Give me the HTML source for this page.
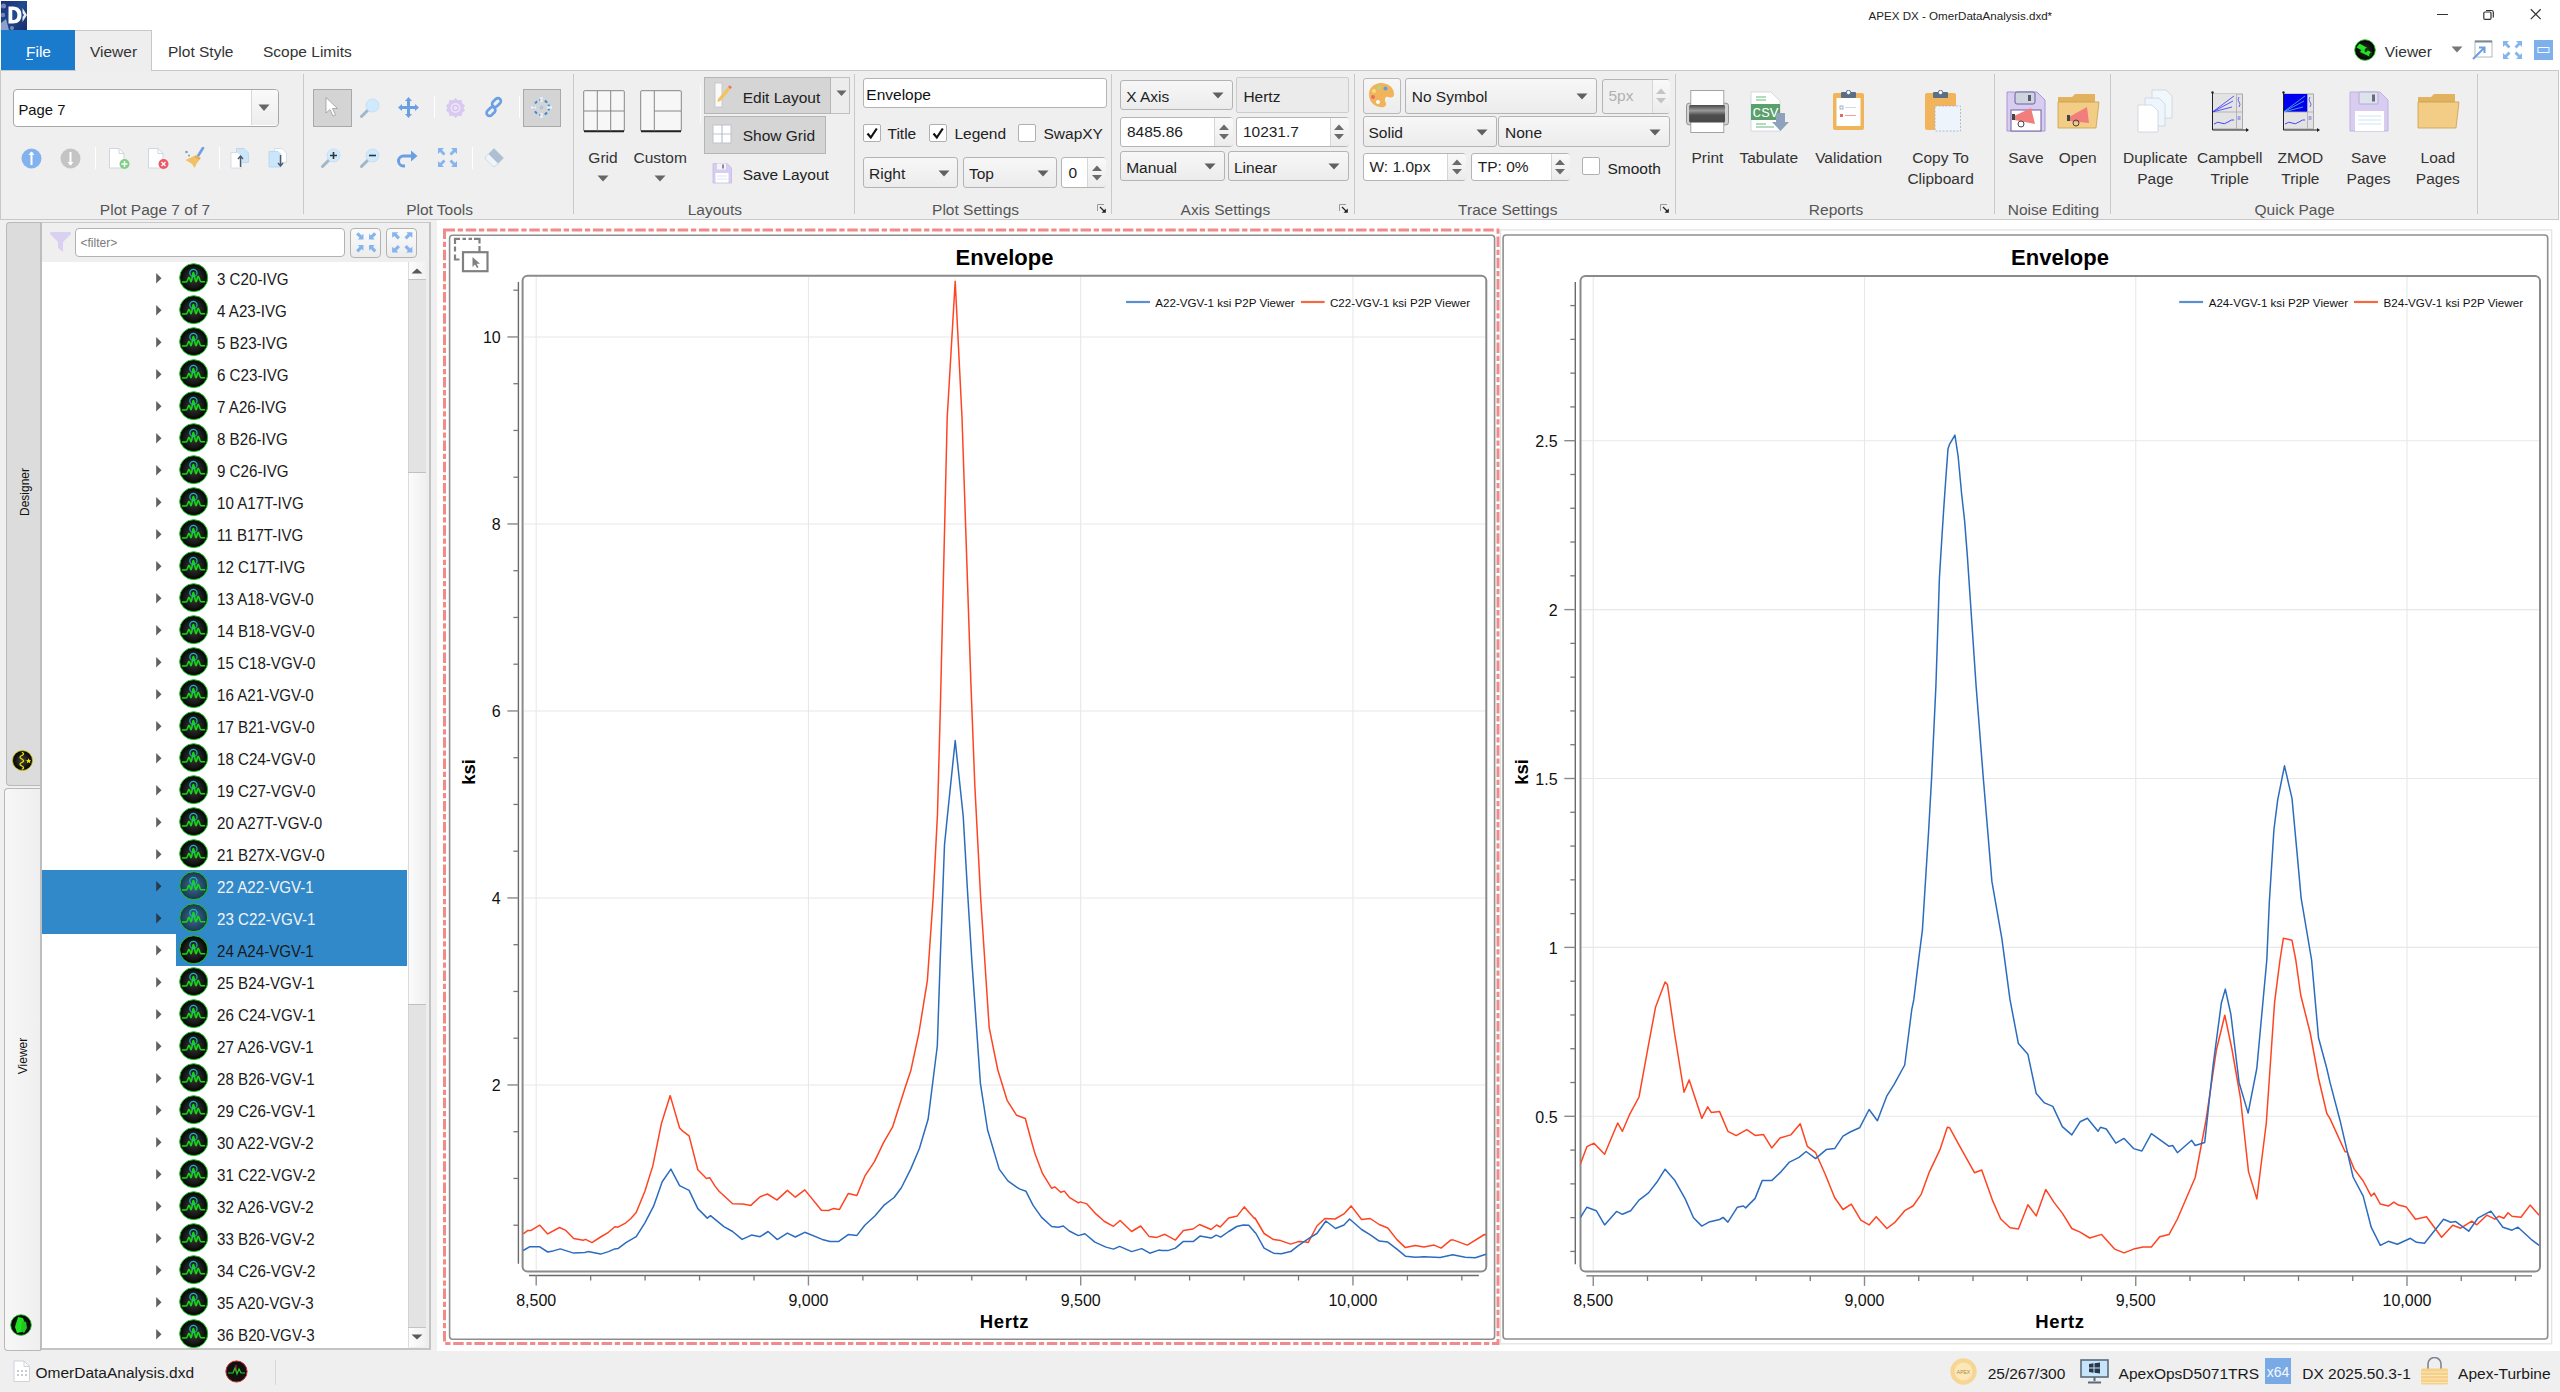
<!DOCTYPE html>
<html><head><meta charset="utf-8"><style>
html,body{margin:0;padding:0;width:2560px;height:1392px;overflow:hidden;background:#fff}
.a{position:absolute;margin:0;padding:0}
.t{white-space:nowrap;font-family:"Liberation Sans", sans-serif}
</style></head><body>
<div class="a" style="left:0px;top:0px;width:2560px;height:30px;background:#fff"></div><svg class="a" style="left:1px;top:1px;" width="27" height="29" viewBox="0 0 27 29"><defs><linearGradient id="lg" x1="0" y1="0" x2="1" y2="1"><stop offset="0" stop-color="#1c2f78"/><stop offset="0.5" stop-color="#1f4a8e"/><stop offset="1" stop-color="#1a2c6a"/></linearGradient></defs><rect x="0" y="0" width="26" height="29" fill="url(#lg)"/><circle cx="2.5" cy="5" r="2.5" fill="#c8cde8" opacity="0.55"/><circle cx="2" cy="14" r="2.2" fill="#c8cde8" opacity="0.5"/><path d="M0 22 L5 18 L8 29 H0 Z" fill="#d8dcf0" opacity="0.6"/><circle cx="11" cy="27" r="2" fill="#d8dcf0" opacity="0.5"/><path d="M7.5 5.5 H12 C17.5 5.5 20.5 9 20.5 14 C20.5 19 17.5 22.5 12 22.5 H7.5 Z M11.3 9 V19 H12 C15 19 16.4 17 16.4 14 C16.4 11 15 9 12 9 Z" fill="#fff"/><path d="M21.5 7 L26 14 L21.5 21 V16 L23 14 L21.5 12 Z" fill="#fff" opacity="0.9"/></svg><div class="a t" style="left:1868.5px;top:10.4px;line-height:11.6px;font-size:11.6px;color:#222;font-weight:normal;">APEX DX - OmerDataAnalysis.dxd*</div><div class="a" style="left:2437px;top:14px;width:11px;height:1px;background:#333"></div><svg class="a" style="left:2481px;top:8px;" width="14" height="14" viewBox="0 0 14 14"><rect x="2.8" y="4" width="7.2" height="7.4" rx="1.2" fill="none" stroke="#333" stroke-width="1.2"/><path d="M5 2.5 H10.5 Q12.3 2.5 12.3 4.3 V9.5" fill="none" stroke="#333" stroke-width="1.2"/></svg><svg class="a" style="left:2529px;top:8px;" width="14" height="14" viewBox="0 0 14 14"><path d="M1.8 1.3 L11.7 11.1 M11.7 1.3 L1.8 11.1" stroke="#333" stroke-width="1.2"/></svg><div class="a" style="left:0px;top:30px;width:2560px;height:41px;background:#fff"></div><div class="a" style="left:1px;top:30px;width:74px;height:41px;background:#1a7bcd"></div><div class="a t" style="left:26.0px;top:44.1px;line-height:15.5px;font-size:15.5px;color:#fff;font-weight:normal;">File</div><div class="a" style="left:26px;top:58.8px;width:6.8px;height:1.3px;background:#fff"></div><div class="a" style="left:75px;top:30px;width:77px;height:41px;background:#eeeeee;border-top:1px solid #c8c8c8;border-right:1px solid #c8c8c8;box-sizing:border-box"></div><div class="a t" style="left:90.0px;top:44.1px;line-height:15.5px;font-size:15.5px;color:#333;font-weight:normal;">Viewer</div><div class="a t" style="left:168.0px;top:44.1px;line-height:15.5px;font-size:15.5px;color:#333;font-weight:normal;">Plot Style</div><div class="a t" style="left:263.0px;top:44.1px;line-height:15.5px;font-size:15.5px;color:#333;font-weight:normal;">Scope Limits</div><div class="a" style="left:0px;top:70px;width:2559px;height:150px;background:#efefef;border-top:1px solid #c8c8c8;border-bottom:1.5px solid #c8c8c8;border-left:1px solid #c8c8c8;border-right:1.5px solid #c8c8c8;box-sizing:border-box"></div><div class="a" style="left:76px;top:69px;width:75px;height:3px;background:#eeeeee"></div><div class="a" style="left:303px;top:74px;width:1.2px;height:140px;background:#c9c9c9"></div><div class="a" style="left:572.5px;top:74px;width:1.2px;height:140px;background:#c9c9c9"></div><div class="a" style="left:854px;top:74px;width:1.2px;height:140px;background:#c9c9c9"></div><div class="a" style="left:1111px;top:74px;width:1.2px;height:140px;background:#c9c9c9"></div><div class="a" style="left:1354px;top:74px;width:1.2px;height:140px;background:#c9c9c9"></div><div class="a" style="left:1675px;top:74px;width:1.2px;height:140px;background:#c9c9c9"></div><div class="a" style="left:1994px;top:74px;width:1.2px;height:140px;background:#c9c9c9"></div><div class="a" style="left:2110px;top:74px;width:1.2px;height:140px;background:#c9c9c9"></div><div class="a" style="left:2476.5px;top:74px;width:1.2px;height:140px;background:#c9c9c9"></div><div class="a t" style="left:-245.0px;width:800px;text-align:center;top:201.9px;line-height:15.5px;font-size:15.5px;color:#555555;font-weight:normal;">Plot Page 7 of 7</div><div class="a t" style="left:39.6px;width:800px;text-align:center;top:201.9px;line-height:15.5px;font-size:15.5px;color:#555555;font-weight:normal;">Plot Tools</div><div class="a t" style="left:314.9px;width:800px;text-align:center;top:201.9px;line-height:15.5px;font-size:15.5px;color:#555555;font-weight:normal;">Layouts</div><div class="a t" style="left:575.6px;width:800px;text-align:center;top:201.9px;line-height:15.5px;font-size:15.5px;color:#555555;font-weight:normal;">Plot Settings</div><div class="a t" style="left:825.4px;width:800px;text-align:center;top:201.9px;line-height:15.5px;font-size:15.5px;color:#555555;font-weight:normal;">Axis Settings</div><div class="a t" style="left:1107.8px;width:800px;text-align:center;top:201.9px;line-height:15.5px;font-size:15.5px;color:#555555;font-weight:normal;">Trace Settings</div><div class="a t" style="left:1436.0px;width:800px;text-align:center;top:201.9px;line-height:15.5px;font-size:15.5px;color:#555555;font-weight:normal;">Reports</div><div class="a t" style="left:1653.4px;width:800px;text-align:center;top:201.9px;line-height:15.5px;font-size:15.5px;color:#555555;font-weight:normal;">Noise Editing</div><div class="a t" style="left:1894.6px;width:800px;text-align:center;top:201.9px;line-height:15.5px;font-size:15.5px;color:#555555;font-weight:normal;">Quick Page</div><div class="a" style="left:13px;top:89px;width:265.5px;height:37.5px;background:#fff;border:1.3px solid #a8a8a8;border-radius:4px;box-sizing:border-box"></div><div class="a" style="left:251px;top:90.3px;width:26.2px;height:35px;background:linear-gradient(#fafafa,#ededed);border-left:1px solid #d8d8d8;border-radius:0 3px 3px 0"></div><svg class="a" style="left:258px;top:104px;" width="12" height="8" viewBox="0 0 12 8"><path d="M0.5 0.5 H11.5 L6 7 Z" fill="#666"/></svg><div class="a t" style="left:18.5px;top:103.1px;line-height:14.8px;font-size:14.8px;color:#111;font-weight:normal;">Page 7</div><svg class="a" style="left:21px;top:148px;" width="21" height="21" viewBox="0 0 21 21"><circle cx="10.5" cy="10.5" r="10" fill="#83b3ee"/><path d="M10.5 4 V17" stroke="#fff" stroke-width="2"/><path d="M7.5 7 L10.5 3.5 L13.5 7" fill="#fff"/></svg><svg class="a" style="left:59.5px;top:148px;" width="21" height="21" viewBox="0 0 21 21"><circle cx="10.5" cy="10.5" r="10" fill="#c4c4c4"/><path d="M10.5 4 V17" stroke="#fff" stroke-width="2"/><path d="M7.5 14 L10.5 17.5 L13.5 14" fill="#fff"/></svg><div class="a" style="left:95px;top:147px;width:1px;height:22px;background:#fff"></div><div class="a" style="left:219px;top:147px;width:1px;height:22px;background:#fff"></div><svg class="a" style="left:108px;top:147px;" width="22" height="23" viewBox="0 0 22 23"><path d="M1.5 1.5 H11 L16 6.5 V21 H1.5 Z" fill="#fff" stroke="#cfd6e0" stroke-width="1"/><path d="M11 1.5 V6.5 H16" fill="none" stroke="#cfd6e0"/><circle cx="16.5" cy="17" r="5" fill="#7fcf86"/><path d="M16.5 14 V20 M13.5 17 H19.5" stroke="#fff" stroke-width="1.5"/></svg><svg class="a" style="left:147px;top:147px;" width="22" height="23" viewBox="0 0 22 23"><path d="M1.5 1.5 H11 L16 6.5 V21 H1.5 Z" fill="#fff" stroke="#cfd6e0" stroke-width="1"/><path d="M11 1.5 V6.5 H16" fill="none" stroke="#cfd6e0"/><circle cx="16.5" cy="17" r="5" fill="#ee5a63"/><path d="M14.5 15 L18.5 19 M18.5 15 L14.5 19" stroke="#fff" stroke-width="1.4"/></svg><svg class="a" style="left:184px;top:147px;" width="22" height="23" viewBox="0 0 22 23"><circle cx="2.5" cy="5" r="1.3" fill="#7d9ec5"/><circle cx="5" cy="8.5" r="1" fill="#7d9ec5"/><path d="M19 1 L14 9" stroke="#6fa0e6" stroke-width="2.6" stroke-linecap="round"/><path d="M12 8 L17 11 L13 16 L10.5 21 L8 17 L1.5 13 Z" fill="#f0c266"/><path d="M11 9.5 L16 12" stroke="#e57d5b" stroke-width="0.8"/></svg><svg class="a" style="left:230px;top:147px;" width="20" height="23" viewBox="0 0 20 23"><path d="M6.5 1.5 H14 L18.5 6 V15.5 H6.5 Z" fill="#c9e6fb" stroke="#b6d3ee" stroke-width="0.8"/><path d="M1 5.5 H8 L11.5 9 V21 H1 Z" fill="#fff" stroke="#cfd6e0" stroke-width="0.8"/><path d="M10.5 9.5 V20 M8 12 L10.5 9 L13 12" fill="none" stroke="#4a5a6a" stroke-width="1.4"/></svg><svg class="a" style="left:268px;top:147px;" width="22" height="23" viewBox="0 0 22 23"><path d="M6.5 1.5 H14 L18.5 6 V15.5 H6.5 Z" fill="#fff" stroke="#cfd6e0" stroke-width="0.8"/><path d="M1 4.5 H10 L13 7.5 V20 H1 Z" fill="#c9e6fb" stroke="#b6d3ee" stroke-width="0.8"/><path d="M12.5 8 V18.5 M10 16 L12.5 19 L15 16" fill="none" stroke="#4a5a6a" stroke-width="1.4"/></svg><div class="a" style="left:313px;top:89px;width:38.5px;height:38px;background:#d4d4d4;border:1.3px solid #a9a9a9;box-sizing:border-box"></div><div class="a" style="left:522.5px;top:89px;width:38.5px;height:38px;background:#d4d4d4;border:1.3px solid #a9a9a9;box-sizing:border-box"></div><svg class="a" style="left:324px;top:96px;" width="16" height="22" viewBox="0 0 16 22"><path d="M2 1.5 L2 17 L6 13.5 L9 20 L11.5 19 L8.5 12.5 L13.5 12.5 Z" fill="#fff" stroke="#9a9a9a" stroke-width="0.8"/></svg><svg class="a" style="left:359px;top:97px;" width="22" height="22" viewBox="0 0 22 22"><path d="M2.5 19.5 L9 13" stroke="#9fb7c9" stroke-width="3" stroke-linecap="round"/><circle cx="13.5" cy="8.5" r="6.6" fill="#cfe9fd" stroke="#b9d9f3" stroke-width="0.6"/></svg><svg class="a" style="left:397px;top:96px;" width="23" height="23" viewBox="0 0 23 23"><path d="M11.5 1 L15 5 H13 V10 H18 V8 L22 11.5 L18 15 V13 H13 V18 H15 L11.5 22 L8 18 H10 V13 H5 V15 L1 11.5 L5 8 V10 H10 V5 H8 Z" fill="#6b9fe4"/></svg><div class="a" style="left:434px;top:96px;width:1px;height:22px;background:#fff"></div><svg class="a" style="left:445px;top:97px;" width="21" height="21" viewBox="0 0 21 21"><path d="M10.5 1 L13 3.5 L16.5 2.8 L17.2 6.3 L20 8.5 L18.5 11 L20 13.5 L17.2 15.7 L16.5 19.2 L13 18.5 L10.5 21 L8 18.5 L4.5 19.2 L3.8 15.7 L1 13.5 L2.5 11 L1 8.5 L3.8 6.3 L4.5 2.8 L8 3.5 Z" fill="#d9c8f0"/><circle cx="10.5" cy="11" r="5" fill="#ece3f8"/><circle cx="10.5" cy="11" r="2.6" fill="none" stroke="#d4c2ec" stroke-width="1.3"/></svg><svg class="a" style="left:483px;top:96px;" width="22" height="22" viewBox="0 0 22 22"><g fill="none" stroke="#6b9fe4" stroke-width="2.6"><rect x="10.5" y="1.5" width="6" height="10" rx="3" transform="rotate(45 13.5 6.5)"/><rect x="5" y="10.5" width="6" height="10" rx="3" transform="rotate(45 8 15.5)"/></g></svg><div class="a" style="left:519px;top:96px;width:1px;height:22px;background:#fff"></div><svg class="a" style="left:530px;top:96px;" width="23" height="23" viewBox="0 0 23 23"><circle cx="11.5" cy="11.5" r="7.5" fill="none" stroke="#3a8ad6" stroke-width="2" stroke-dasharray="3 2.5"/><circle cx="11.5" cy="11.5" r="1.2" fill="none" stroke="#78aee6" stroke-width="0.8"/><path d="M11.5 1 V6 M11.5 17 V22 M1 11.5 H6 M17 11.5 H22" stroke="#e6f0fb" stroke-width="2.5"/></svg><svg class="a" style="left:320px;top:147px;" width="22" height="22" viewBox="0 0 22 22"><path d="M2.5 19.5 L9 13" stroke="#9fb7c9" stroke-width="3" stroke-linecap="round"/><circle cx="13.5" cy="8.5" r="6.6" fill="#cfe9fd" stroke="#b9d9f3" stroke-width="0.6"/><path d="M13.5 5 V12 M10 8.5 H17" stroke="#333" stroke-width="1.6"/></svg><svg class="a" style="left:359px;top:147px;" width="22" height="22" viewBox="0 0 22 22"><path d="M2.5 19.5 L9 13" stroke="#9fb7c9" stroke-width="3" stroke-linecap="round"/><circle cx="13.5" cy="8.5" r="6.6" fill="#cfe9fd" stroke="#b9d9f3" stroke-width="0.6"/><path d="M10 8.5 H17" stroke="#333" stroke-width="1.6"/></svg><svg class="a" style="left:397px;top:148px;" width="22" height="20" viewBox="0 0 22 20"><path d="M8 18 H6.5 A5 5 0 0 1 6.5 8 H15" fill="none" stroke="#6b9fe4" stroke-width="3"/><path d="M14 2.5 L20.5 8 L14 13.5 Z" fill="#6b9fe4"/></svg><svg class="a" style="left:437px;top:147px;" width="21" height="21" viewBox="0 0 21 21"><g fill="#86b4ee"><path d="M1 1 H7 L5 3 L8.5 6.5 L6.5 8.5 L3 5 L1 7 Z"/><path d="M20 1 H14 L16 3 L12.5 6.5 L14.5 8.5 L18 5 L20 7 Z"/><path d="M1 20 H7 L5 18 L8.5 14.5 L6.5 12.5 L3 16 L1 14 Z"/><path d="M20 20 H14 L16 18 L12.5 14.5 L14.5 12.5 L18 16 L20 14 Z"/></g></svg><div class="a" style="left:472px;top:147px;width:1px;height:22px;background:#fff"></div><svg class="a" style="left:483px;top:147px;" width="22" height="22" viewBox="0 0 22 22"><path d="M11 1.5 L20.5 11 L12.5 19 Q11 20.5 9.5 19 L3 12.5 Q1.5 11 3 9.5 Z" fill="#eef4fb" stroke="#c5d0dc" stroke-width="0.8"/><path d="M11 1.5 L20.5 11 L15 16.5 L5.5 7 Z" fill="#aebfd2"/></svg><svg class="a" style="left:582.5px;top:89.5px;" width="42" height="43" viewBox="0 0 42 43"><rect x="0.7" y="0.7" width="40.6" height="40.6" fill="#f7f7f7" stroke="#7a7a7a" stroke-width="0.9" rx="1"/><path d="M1 41.2 H41" stroke="#222" stroke-width="2"/><path d="M14.3 1 V41 M27.7 1 V41 M1 21 H41" stroke="#7a7a7a" stroke-width="0.9"/></svg><svg class="a" style="left:639.8px;top:89.5px;" width="42" height="43" viewBox="0 0 42 43"><rect x="0.7" y="0.7" width="40.6" height="40.6" fill="#f7f7f7" stroke="#7a7a7a" stroke-width="0.9" rx="1"/><path d="M1 41.2 H41" stroke="#222" stroke-width="2"/><path d="M14.3 1 V41 M14.3 21 H41" stroke="#7a7a7a" stroke-width="0.9"/></svg><div class="a t" style="left:203.0px;width:800px;text-align:center;top:149.7px;line-height:15.5px;font-size:15.5px;color:#333;font-weight:normal;">Grid</div><div class="a t" style="left:260.2px;width:800px;text-align:center;top:149.7px;line-height:15.5px;font-size:15.5px;color:#333;font-weight:normal;">Custom</div><svg class="a" style="left:597px;top:175px;" width="12" height="7" viewBox="0 0 12 7"><path d="M0.5 0.5 H11.5 L6 6.5 Z" fill="#666"/></svg><svg class="a" style="left:654px;top:175px;" width="12" height="7" viewBox="0 0 12 7"><path d="M0.5 0.5 H11.5 L6 6.5 Z" fill="#666"/></svg><div class="a" style="left:700px;top:84px;width:1px;height:40px;background:#fafafa"></div><div class="a" style="left:703.7px;top:77px;width:127px;height:37.3px;background:#d5d5d5;border:1.3px solid #b5b5b5;box-sizing:border-box"></div><div class="a" style="left:830.6px;top:77px;width:19.4px;height:37.3px;background:#ececec;border:1.3px solid #c0c0c0;border-left:none;box-sizing:border-box"></div><svg class="a" style="left:836px;top:90px;" width="11" height="7" viewBox="0 0 11 7"><path d="M0.5 0.5 H10.5 L5.5 6 Z" fill="#666"/></svg><div class="a" style="left:703.7px;top:116.4px;width:122.3px;height:37.2px;background:#d5d5d5;border:1.3px solid #b5b5b5;box-sizing:border-box"></div><svg class="a" style="left:714px;top:82px;" width="20" height="27" viewBox="0 0 20 27"><rect x="1" y="1" width="7" height="24" fill="#fafafa" stroke="#c4c4c4" stroke-width="0.8"/><path d="M4 17 L14 5 L16.5 7 L6.5 19 L3.5 20 Z" fill="#f2c35c"/><path d="M14 5 L15.5 3.2 L18 5.2 L16.5 7 Z" fill="#e9736d"/></svg><svg class="a" style="left:712px;top:124px;" width="20" height="20" viewBox="0 0 20 20"><rect x="1" y="1" width="18" height="18" fill="#fff" stroke="#bcc4cc" stroke-width="1"/><path d="M10 1 V19 M1 10 H19" stroke="#bcc4cc" stroke-width="1.2"/></svg><svg class="a" style="left:712px;top:162px;" width="20" height="22" viewBox="0 0 20 22"><path d="M1 1.5 H15 L19.5 6 V21 H1 Z" fill="#d6cdf0" stroke="#c6bbe6" stroke-width="0.8"/><rect x="5" y="1.5" width="9" height="6" fill="#f4f4f4"/><rect x="10" y="2.5" width="2" height="4" fill="#8a8aa0"/><rect x="3.5" y="11" width="13" height="9.5" fill="#fff"/><path d="M5 14 H15 M5 17 H15" stroke="#cde0f0" stroke-width="0.8"/></svg><div class="a t" style="left:742.7px;top:89.6px;line-height:15.5px;font-size:15.5px;color:#222;font-weight:normal;">Edit Layout</div><div class="a t" style="left:742.7px;top:128.3px;line-height:15.5px;font-size:15.5px;color:#222;font-weight:normal;">Show Grid</div><div class="a t" style="left:742.7px;top:166.8px;line-height:15.5px;font-size:15.5px;color:#222;font-weight:normal;">Save Layout</div><div class="a" style="left:862.5px;top:77.5px;width:244px;height:30.3px;background:#fff;border:1.2px solid #b4b4b4;border-radius:3px;box-sizing:border-box"></div><div class="a t" style="left:866.3px;top:86.7px;line-height:15.5px;font-size:15.5px;color:#111;font-weight:normal;">Envelope</div><div class="a" style="left:862.5px;top:123.8px;width:18px;height:18px;background:#fff;border:1.2px solid #b0b0b0;border-radius:2px;box-sizing:border-box"></div><svg class="a" style="left:864.5px;top:125.8px;" width="14" height="14" viewBox="0 0 14 14"><path d="M2.5 7.5 L5.8 11.5 L11.8 2.5" fill="none" stroke="#111" stroke-width="2.2" stroke-linejoin="miter"/></svg><div class="a t" style="left:887.5px;top:125.7px;line-height:15.5px;font-size:15.5px;color:#222;font-weight:normal;">Title</div><div class="a" style="left:929.3px;top:123.8px;width:18px;height:18px;background:#fff;border:1.2px solid #b0b0b0;border-radius:2px;box-sizing:border-box"></div><svg class="a" style="left:931.3px;top:125.8px;" width="14" height="14" viewBox="0 0 14 14"><path d="M2.5 7.5 L5.8 11.5 L11.8 2.5" fill="none" stroke="#111" stroke-width="2.2" stroke-linejoin="miter"/></svg><div class="a t" style="left:954.4px;top:125.7px;line-height:15.5px;font-size:15.5px;color:#222;font-weight:normal;">Legend</div><div class="a" style="left:1018.3px;top:123.8px;width:18px;height:18px;background:#fff;border:1.2px solid #b0b0b0;border-radius:2px;box-sizing:border-box"></div><div class="a t" style="left:1043.5px;top:125.7px;line-height:15.5px;font-size:15.5px;color:#222;font-weight:normal;">SwapXY</div><div class="a" style="left:862.5px;top:157.3px;width:95.7px;height:30.7px;background:linear-gradient(#f7f7f7,#ececec);border:1.2px solid #b4b4b4;border-radius:3px;box-sizing:border-box"></div><div class="a t" style="left:869.1px;top:166.1px;line-height:15.5px;font-size:15.5px;color:#1e1e1e;font-weight:normal;">Right</div><svg class="a" style="left:938px;top:169.65px;" width="12" height="7" viewBox="0 0 12 7"><path d="M0.5 0.5 H11.5 L6 6.5 Z" fill="#5f5f5f"/></svg><div class="a" style="left:962.5px;top:157.3px;width:94.5px;height:30.7px;background:linear-gradient(#f7f7f7,#ececec);border:1.2px solid #b4b4b4;border-radius:3px;box-sizing:border-box"></div><div class="a t" style="left:969.0px;top:166.1px;line-height:15.5px;font-size:15.5px;color:#1e1e1e;font-weight:normal;">Top</div><svg class="a" style="left:1037px;top:169.65px;" width="12" height="7" viewBox="0 0 12 7"><path d="M0.5 0.5 H11.5 L6 6.5 Z" fill="#5f5f5f"/></svg><div class="a" style="left:1061.4px;top:157.3px;width:45px;height:30.7px;background:#fff;border:1.2px solid #b4b4b4;border-radius:3px;box-sizing:border-box"></div><div class="a" style="left:1087.2px;top:158.3px;width:18.200000000000045px;height:28.7px;background:linear-gradient(#f9f9f9,#ececec);border-left:1px solid #d6d6d6;border-radius:0 2px 2px 0"></div><svg class="a" style="left:1090.8000000000002px;top:163.65px;" width="12" height="18" viewBox="0 0 12 18"><path d="M1 7 L6 1.5 L11 7 Z" fill="#6a6a6a"/><path d="M1 11 L6 16.5 L11 11 Z" fill="#6a6a6a"/></svg><div class="a t" style="left:1068.4px;top:165.0px;line-height:15.5px;font-size:15.5px;color:#1e1e1e;font-weight:normal;">0</div><svg class="a" style="left:1097.0px;top:204.3px;" width="10" height="10" viewBox="0 0 10 10"><path d="M0.5 7 V0.5 H7" fill="none" stroke="#999" stroke-width="1"/><path d="M3 3 L7.5 7.5" stroke="#222" stroke-width="1.3"/><path d="M4.5 8.8 H8.8 V4.5 Z" fill="#222"/></svg><div class="a" style="left:1119.9px;top:79.9px;width:113.2px;height:30.5px;background:linear-gradient(#f7f7f7,#ececec);border:1.2px solid #b4b4b4;border-radius:3px;box-sizing:border-box"></div><div class="a t" style="left:1126.2px;top:89.1px;line-height:15.5px;font-size:15.5px;color:#1e1e1e;font-weight:normal;">X Axis</div><svg class="a" style="left:1212.4px;top:92.15px;" width="12" height="7" viewBox="0 0 12 7"><path d="M0.5 0.5 H11.5 L6 6.5 Z" fill="#5f5f5f"/></svg><div class="a" style="left:1235.5px;top:76.9px;width:113px;height:35.8px;background:#ebebeb;border:1.2px solid #cdcdcd;border-radius:2px;box-sizing:border-box"></div><div class="a t" style="left:1243.4px;top:89.1px;line-height:15.5px;font-size:15.5px;color:#222;font-weight:normal;">Hertz</div><div class="a" style="left:1119.9px;top:117.4px;width:113.2px;height:29.3px;background:#fff;border:1.2px solid #b4b4b4;border-radius:3px;box-sizing:border-box"></div><div class="a" style="left:1214.1px;top:118.4px;width:18.000000000000185px;height:27.3px;background:linear-gradient(#f9f9f9,#ececec);border-left:1px solid #d6d6d6;border-radius:0 2px 2px 0"></div><svg class="a" style="left:1217.6px;top:123.05000000000001px;" width="12" height="18" viewBox="0 0 12 18"><path d="M1 7 L6 1.5 L11 7 Z" fill="#6a6a6a"/><path d="M1 11 L6 16.5 L11 11 Z" fill="#6a6a6a"/></svg><div class="a t" style="left:1126.9px;top:124.4px;line-height:15.5px;font-size:15.5px;color:#1e1e1e;font-weight:normal;">8485.86</div><div class="a" style="left:1235.9px;top:117.4px;width:113.2px;height:29.3px;background:#fff;border:1.2px solid #b4b4b4;border-radius:3px;box-sizing:border-box"></div><div class="a" style="left:1329.7px;top:118.4px;width:18.40000000000005px;height:27.3px;background:linear-gradient(#f9f9f9,#ececec);border-left:1px solid #d6d6d6;border-radius:0 2px 2px 0"></div><svg class="a" style="left:1333.4px;top:123.05000000000001px;" width="12" height="18" viewBox="0 0 12 18"><path d="M1 7 L6 1.5 L11 7 Z" fill="#6a6a6a"/><path d="M1 11 L6 16.5 L11 11 Z" fill="#6a6a6a"/></svg><div class="a t" style="left:1242.9px;top:124.4px;line-height:15.5px;font-size:15.5px;color:#1e1e1e;font-weight:normal;">10231.7</div><div class="a" style="left:1119.9px;top:150.9px;width:105px;height:30.5px;background:linear-gradient(#f7f7f7,#ececec);border:1.2px solid #b4b4b4;border-radius:3px;box-sizing:border-box"></div><div class="a t" style="left:1126.2px;top:159.9px;line-height:15.5px;font-size:15.5px;color:#1e1e1e;font-weight:normal;">Manual</div><svg class="a" style="left:1204px;top:163.15px;" width="12" height="7" viewBox="0 0 12 7"><path d="M0.5 0.5 H11.5 L6 6.5 Z" fill="#5f5f5f"/></svg><div class="a" style="left:1227.7px;top:150.9px;width:121.4px;height:30.5px;background:linear-gradient(#f7f7f7,#ececec);border:1.2px solid #b4b4b4;border-radius:3px;box-sizing:border-box"></div><div class="a t" style="left:1234.0px;top:159.9px;line-height:15.5px;font-size:15.5px;color:#1e1e1e;font-weight:normal;">Linear</div><svg class="a" style="left:1328.4px;top:163.15px;" width="12" height="7" viewBox="0 0 12 7"><path d="M0.5 0.5 H11.5 L6 6.5 Z" fill="#5f5f5f"/></svg><svg class="a" style="left:1339.2px;top:203.5px;" width="10" height="10" viewBox="0 0 10 10"><path d="M0.5 7 V0.5 H7" fill="none" stroke="#999" stroke-width="1"/><path d="M3 3 L7.5 7.5" stroke="#222" stroke-width="1.3"/><path d="M4.5 8.8 H8.8 V4.5 Z" fill="#222"/></svg><div class="a" style="left:1362.5px;top:77.6px;width:38.7px;height:36.3px;background:linear-gradient(#f7f7f7,#ececec);border:1.2px solid #b8b8b8;border-radius:3px;box-sizing:border-box"></div><svg class="a" style="left:1367px;top:81px;" width="29" height="28" viewBox="0 0 29 28"><path d="M14 2 C22 2 27 7 27 13 C27 17 24 17 21 16 C18 15 17 19 19 22 C20 25 17 27 13 26 C6 25 2 20 2 13 C2 7 7 2 14 2 Z" fill="#f2b45a"/><circle cx="12" cy="6.5" r="2" fill="#a8d88a"/><circle cx="18.5" cy="7.5" r="2" fill="#5aa0e6"/><circle cx="7" cy="10" r="2" fill="#f2e27a"/><circle cx="6" cy="16" r="2" fill="#ec6a6a"/><circle cx="11" cy="21" r="2" fill="#fff"/></svg><div class="a" style="left:1405.4px;top:77.6px;width:191.5px;height:36.3px;background:linear-gradient(#f7f7f7,#ececec);border:1.2px solid #b4b4b4;border-radius:3px;box-sizing:border-box"></div><div class="a t" style="left:1411.7px;top:89.1px;line-height:15.5px;font-size:15.5px;color:#1e1e1e;font-weight:normal;">No Symbol</div><svg class="a" style="left:1575.6px;top:92.75px;" width="12" height="7" viewBox="0 0 12 7"><path d="M0.5 0.5 H11.5 L6 6.5 Z" fill="#5f5f5f"/></svg><div class="a" style="left:1601.5px;top:78.5px;width:68.5px;height:35px;background:#efefef;border:1.2px solid #b4b4b4;border-radius:3px;box-sizing:border-box"></div><div class="a" style="left:1651.9px;top:79.5px;width:17.09999999999991px;height:33px;background:linear-gradient(#f9f9f9,#ececec);border-left:1px solid #d6d6d6;border-radius:0 2px 2px 0"></div><svg class="a" style="left:1654.95px;top:87.0px;" width="12" height="18" viewBox="0 0 12 18"><path d="M1 7 L6 1.5 L11 7 Z" fill="#c4c4c4"/><path d="M1 11 L6 16.5 L11 11 Z" fill="#c4c4c4"/></svg><div class="a t" style="left:1608.5px;top:88.4px;line-height:15.5px;font-size:15.5px;color:#b0b0b0;font-weight:normal;">5px</div><div class="a" style="left:1362.5px;top:116.2px;width:134px;height:31px;background:linear-gradient(#f7f7f7,#ececec);border:1.2px solid #b4b4b4;border-radius:3px;box-sizing:border-box"></div><div class="a t" style="left:1368.5px;top:125.4px;line-height:15.5px;font-size:15.5px;color:#1e1e1e;font-weight:normal;">Solid</div><svg class="a" style="left:1476px;top:128.7px;" width="12" height="7" viewBox="0 0 12 7"><path d="M0.5 0.5 H11.5 L6 6.5 Z" fill="#5f5f5f"/></svg><div class="a" style="left:1498.4px;top:116.2px;width:171.6px;height:31px;background:linear-gradient(#f7f7f7,#ececec);border:1.2px solid #b4b4b4;border-radius:3px;box-sizing:border-box"></div><div class="a t" style="left:1505.0px;top:125.4px;line-height:15.5px;font-size:15.5px;color:#1e1e1e;font-weight:normal;">None</div><svg class="a" style="left:1649.4px;top:128.7px;" width="12" height="7" viewBox="0 0 12 7"><path d="M0.5 0.5 H11.5 L6 6.5 Z" fill="#5f5f5f"/></svg><div class="a" style="left:1362.5px;top:152.6px;width:103.5px;height:28.1px;background:#fff;border:1.2px solid #b4b4b4;border-radius:3px;box-sizing:border-box"></div><div class="a" style="left:1447.3px;top:153.6px;width:17.700000000000045px;height:26.1px;background:linear-gradient(#f9f9f9,#ececec);border-left:1px solid #d6d6d6;border-radius:0 2px 2px 0"></div><svg class="a" style="left:1450.65px;top:157.65px;" width="12" height="18" viewBox="0 0 12 18"><path d="M1 7 L6 1.5 L11 7 Z" fill="#6a6a6a"/><path d="M1 11 L6 16.5 L11 11 Z" fill="#6a6a6a"/></svg><div class="a t" style="left:1369.5px;top:159.0px;line-height:15.5px;font-size:15.5px;color:#1e1e1e;font-weight:normal;">W: 1.0px</div><div class="a" style="left:1470.8px;top:152.6px;width:99.1px;height:28.1px;background:#fff;border:1.2px solid #b4b4b4;border-radius:3px;box-sizing:border-box"></div><div class="a" style="left:1551px;top:153.6px;width:17.89999999999995px;height:26.1px;background:linear-gradient(#f9f9f9,#ececec);border-left:1px solid #d6d6d6;border-radius:0 2px 2px 0"></div><svg class="a" style="left:1554.45px;top:157.65px;" width="12" height="18" viewBox="0 0 12 18"><path d="M1 7 L6 1.5 L11 7 Z" fill="#6a6a6a"/><path d="M1 11 L6 16.5 L11 11 Z" fill="#6a6a6a"/></svg><div class="a t" style="left:1477.8px;top:159.0px;line-height:15.5px;font-size:15.5px;color:#1e1e1e;font-weight:normal;">TP: 0%</div><div class="a" style="left:1582.3px;top:157.3px;width:18px;height:18px;background:#fff;border:1.2px solid #b0b0b0;border-radius:2px;box-sizing:border-box"></div><div class="a t" style="left:1607.4px;top:160.6px;line-height:15.5px;font-size:15.5px;color:#222;font-weight:normal;">Smooth</div><svg class="a" style="left:1660.3px;top:203.5px;" width="10" height="10" viewBox="0 0 10 10"><path d="M0.5 7 V0.5 H7" fill="none" stroke="#999" stroke-width="1"/><path d="M3 3 L7.5 7.5" stroke="#222" stroke-width="1.3"/><path d="M4.5 8.8 H8.8 V4.5 Z" fill="#222"/></svg><svg class="a" style="left:1686px;top:90px;" width="43" height="43" viewBox="0 0 43 43"><defs><linearGradient id="pg" x1="0" y1="0" x2="0" y2="1"><stop offset="0" stop-color="#4a4a4a"/><stop offset="0.32" stop-color="#9a9a9a"/><stop offset="0.58" stop-color="#4d4d4d"/><stop offset="1" stop-color="#4a4a4a"/></linearGradient></defs><rect x="0.5" y="13.2" width="42" height="21.6" rx="2.5" fill="#d2d2d2" stroke="#8a8a8a" stroke-width="0.9"/><rect x="4.8" y="0.5" width="33" height="42" fill="#fff" stroke="#9a9a9a" stroke-width="0.9"/><rect x="3.1" y="15.1" width="35.9" height="17.3" rx="1.5" fill="url(#pg)"/></svg><div class="a t" style="left:1307.4px;width:800px;text-align:center;top:149.5px;line-height:15.5px;font-size:15.5px;color:#333;font-weight:normal;">Print</div><svg class="a" style="left:1750px;top:91px;" width="40" height="42" viewBox="0 0 40 42"><path d="M1 1 H21 L30 10 V40 H1 Z" fill="#fff" stroke="#c9d1da" stroke-width="0.8"/><path d="M6 6 H16 M6 9 H16 M6 33 H16 M6 36 H24" stroke="#9bd1a6" stroke-width="1.4"/><rect x="1" y="13" width="29" height="16" fill="#5aa06c"/><text x="2.5" y="26" font-family="Liberation Mono" font-size="13" fill="#fff" textLength="26" lengthAdjust="spacingAndGlyphs">CSV</text><path d="M26 22 H35 V31 H39 L30.5 40 L22 31 H26 Z" fill="#8ea3bb"/></svg><div class="a t" style="left:1368.8px;width:800px;text-align:center;top:149.5px;line-height:15.5px;font-size:15.5px;color:#333;font-weight:normal;">Tabulate</div><svg class="a" style="left:1832px;top:90px;" width="33" height="41" viewBox="0 0 33 41"><rect x="1" y="3" width="31" height="37" rx="2" fill="#f2b45a"/><rect x="4.5" y="8" width="24" height="28" fill="#fff"/><rect x="9" y="2" width="15" height="6" rx="1" fill="#5a6e86"/><circle cx="16.5" cy="2.5" r="2.2" fill="#fff" stroke="#5a6e86"/><rect x="8" y="16" width="3" height="3" fill="none" stroke="#8aa0b8" stroke-width="0.8"/><path d="M13 17.5 H24" stroke="#c2d0de" stroke-width="0.8"/><rect x="8" y="24" width="3" height="3" fill="#e06a6a"/><path d="M13 25.5 H24" stroke="#e88a8a" stroke-width="0.8"/></svg><div class="a t" style="left:1448.6px;width:800px;text-align:center;top:149.5px;line-height:15.5px;font-size:15.5px;color:#333;font-weight:normal;">Validation</div><svg class="a" style="left:1924px;top:90px;" width="38" height="43" viewBox="0 0 38 43"><rect x="1" y="3" width="31" height="37" rx="2" fill="#f2b45a"/><rect x="9" y="2" width="15" height="6" rx="1" fill="#5a6e86"/><circle cx="16.5" cy="2.5" r="2.2" fill="#fff" stroke="#5a6e86"/><rect x="11" y="16" width="25.5" height="25" fill="#eef4fb" stroke="#a9b6c4" stroke-width="0.9" stroke-dasharray="2 1.5"/></svg><div class="a t" style="left:1540.6px;width:800px;text-align:center;top:149.5px;line-height:15.5px;font-size:15.5px;color:#333;font-weight:normal;">Copy To</div><div class="a t" style="left:1540.6px;width:800px;text-align:center;top:170.8px;line-height:15.5px;font-size:15.5px;color:#333;font-weight:normal;">Clipboard</div><svg class="a" style="left:2006px;top:91px;" width="40" height="41" viewBox="0 0 40 41"><path d="M1 1 H31 L39 9 V40 H1 Z" fill="#d8cdf0" stroke="#a996d6" stroke-width="1"/><rect x="9" y="1" width="20" height="12" rx="2" fill="#cdd5de" stroke="#6f5f9e"/><rect x="22" y="4" width="3" height="6" fill="#5a5a6a"/><rect x="5" y="19" width="30" height="21" fill="#fff" stroke="#6f5f9e"/><path d="M8 25 L25 17 L29 33 L8 29 Z" fill="#f27d7d"/><rect x="6" y="23" width="3" height="6" fill="#444"/><circle cx="15" cy="33" r="3" fill="none" stroke="#444"/></svg><div class="a t" style="left:1625.9px;width:800px;text-align:center;top:149.5px;line-height:15.5px;font-size:15.5px;color:#333;font-weight:normal;">Save</div><svg class="a" style="left:2057px;top:93px;" width="43" height="36" viewBox="0 0 43 36"><path d="M1 4 H15 L18 1 H38 V12 H1 Z" fill="#e2b25e"/><path d="M1 9 H42 L39 35 H1 Z" fill="#f3cd85" stroke="#c89e4e" stroke-width="0.8"/><path d="M12 24 L30 14 L32 30 L12 28 Z" fill="#f27d7d"/><rect x="10" y="22" width="3" height="6" fill="#444"/><circle cx="19" cy="30" r="3" fill="none" stroke="#444"/></svg><div class="a t" style="left:1677.7px;width:800px;text-align:center;top:149.5px;line-height:15.5px;font-size:15.5px;color:#333;font-weight:normal;">Open</div><svg class="a" style="left:2137px;top:89px;" width="37" height="44" viewBox="0 0 37 44"><path d="M15 1 H29 L35 7 V29 H15 Z" fill="#f2f7fc" stroke="#c9d3de" stroke-width="0.8"/><path d="M8 9 H22 L28 15 V37 H8 Z" fill="#eef5fc" stroke="#c9d3de" stroke-width="0.8"/><path d="M1 16 H15 L21 22 V43 H1 Z" fill="#fff" stroke="#c9d3de" stroke-width="0.8"/></svg><div class="a t" style="left:1755.3px;width:800px;text-align:center;top:150.4px;line-height:15.5px;font-size:15.5px;color:#333;font-weight:normal;">Duplicate</div><div class="a t" style="left:1755.3px;width:800px;text-align:center;top:171.1px;line-height:15.5px;font-size:15.5px;color:#333;font-weight:normal;">Page</div><svg class="a" style="left:2211px;top:91px;" width="39" height="42" viewBox="0 0 39 42"><rect x="1.5" y="3" width="30" height="35" fill="#e3e3e3" stroke="#999" stroke-width="0.8"/><rect x="1.5" y="3" width="24" height="18" fill="#e3e3e3"/><path d="M25.5 3 V38 M1.5 21 H31.5" stroke="#aaa" stroke-width="0.8"/><path d="M1.5 21 L23 5 M1.5 21 L22 10 M1.5 21 L21 16" stroke="#44f" stroke-width="0.9"/><path d="M3 33 Q7 30 10 32 T17 31 T23 29" fill="none" stroke="#44f" stroke-width="1"/><path d="M28 6 Q26 9 28 11 T28 16" fill="none" stroke="#44f" stroke-width="0.8"/><path d="M26.5 26 H29.5 M26.5 28 H29.5" stroke="#44f" stroke-width="0.8"/><path d="M1.5 1 V39 H37" fill="none" stroke="#222" stroke-width="1"/><circle cx="1.5" cy="1.5" r="1.2" fill="#222"/><path d="M35 37 L38 39 L35 41" fill="#222"/></svg><div class="a t" style="left:1829.7px;width:800px;text-align:center;top:150.4px;line-height:15.5px;font-size:15.5px;color:#333;font-weight:normal;">Campbell</div><div class="a t" style="left:1829.7px;width:800px;text-align:center;top:171.1px;line-height:15.5px;font-size:15.5px;color:#333;font-weight:normal;">Triple</div><svg class="a" style="left:2282px;top:91px;" width="39" height="42" viewBox="0 0 39 42"><rect x="1.5" y="3" width="30" height="35" fill="#e3e3e3" stroke="#999" stroke-width="0.8"/><rect x="1.5" y="3" width="24" height="18" fill="#0000ee"/><path d="M25.5 3 V38 M1.5 21 H31.5" stroke="#aaa" stroke-width="0.8"/><path d="M1.5 21 L23 5 M1.5 21 L22 10 M1.5 21 L21 16" stroke="#5ad" stroke-width="0.9"/><path d="M3 33 Q7 30 10 32 T17 31 T23 29" fill="none" stroke="#44f" stroke-width="1"/><path d="M28 6 Q26 9 28 11 T28 16" fill="none" stroke="#44f" stroke-width="0.8"/><path d="M26.5 26 H29.5 M26.5 28 H29.5" stroke="#44f" stroke-width="0.8"/><path d="M1.5 1 V39 H37" fill="none" stroke="#222" stroke-width="1"/><circle cx="1.5" cy="1.5" r="1.2" fill="#222"/><path d="M35 37 L38 39 L35 41" fill="#222"/></svg><div class="a t" style="left:1900.4px;width:800px;text-align:center;top:150.4px;line-height:15.5px;font-size:15.5px;color:#333;font-weight:normal;">ZMOD</div><div class="a t" style="left:1900.4px;width:800px;text-align:center;top:171.1px;line-height:15.5px;font-size:15.5px;color:#333;font-weight:normal;">Triple</div><svg class="a" style="left:2348.5px;top:91px;" width="40" height="41" viewBox="0 0 40 41"><path d="M1 1 H31 L39 9 V40 H1 Z" fill="#d8cdf0" stroke="#c0b2e2" stroke-width="1"/><rect x="10" y="1" width="19" height="12" rx="1" fill="#dde3ea" stroke="#b6a8d8"/><rect x="23" y="3.5" width="3" height="7" fill="#6a6a7a"/><rect x="6" y="20" width="29" height="20" fill="#fff"/><path d="M9 25 H32 M9 29 H32 M9 33 H32" stroke="#cfe3f3" stroke-width="1"/></svg><div class="a t" style="left:1968.6px;width:800px;text-align:center;top:150.4px;line-height:15.5px;font-size:15.5px;color:#333;font-weight:normal;">Save</div><div class="a t" style="left:1968.6px;width:800px;text-align:center;top:171.1px;line-height:15.5px;font-size:15.5px;color:#333;font-weight:normal;">Pages</div><svg class="a" style="left:2417px;top:93px;" width="43" height="36" viewBox="0 0 43 36"><path d="M1 4 H14 L17 1 H38 V12 H1 Z" fill="#e2b25e"/><path d="M1 9 H42 L39 35 H1 Z" fill="#f3cd85" stroke="#c89e4e" stroke-width="0.8"/></svg><div class="a t" style="left:2037.8px;width:800px;text-align:center;top:150.4px;line-height:15.5px;font-size:15.5px;color:#333;font-weight:normal;">Load</div><div class="a t" style="left:2037.8px;width:800px;text-align:center;top:171.1px;line-height:15.5px;font-size:15.5px;color:#333;font-weight:normal;">Pages</div><svg class="a" style="left:2354px;top:39px;" width="22" height="22" viewBox="0 0 22 22"><defs><radialGradient id="gv" cx="50%" cy="50%" r="50%"><stop offset="0" stop-color="#333"/><stop offset="1" stop-color="#000"/></radialGradient></defs><circle cx="11" cy="11" r="10.3" fill="url(#gv)" stroke="#1fc81f" stroke-width="0.9"/><path d="M2.5 8.5 L5.5 4.5 L13.5 9 L11 13 Z" fill="#22e622"/><path d="M6 13 L9 9 L18 13.5 L15.5 17.5 Z" fill="#22e622"/><ellipse cx="12.3" cy="11" rx="1.4" ry="2.3" transform="rotate(30 12.3 11)" fill="#0a3a0a"/><ellipse cx="16.8" cy="15.5" rx="1.4" ry="2.3" transform="rotate(30 16.8 15.5)" fill="#0a3a0a"/></svg><div class="a t" style="left:2384.8px;top:43.5px;line-height:15.5px;font-size:15.5px;color:#333;font-weight:normal;">Viewer</div><svg class="a" style="left:2451px;top:46px;" width="12" height="7" viewBox="0 0 12 7"><path d="M0.5 0.5 H11.5 L6 6.5 Z" fill="#777"/></svg><svg class="a" style="left:2472px;top:40px;" width="21" height="20" viewBox="0 0 21 20"><rect x="3" y="1" width="17" height="16" fill="#fff" stroke="#9aa" stroke-width="0.8"/><rect x="3" y="0.5" width="17" height="2" fill="#7a8a9a"/><path d="M1 19 L12 8 M7 7.5 H12.5 V13" fill="none" stroke="#6b9fe4" stroke-width="2"/></svg><svg class="a" style="left:2502px;top:40px;" width="21" height="20" viewBox="0 0 21 20"><g fill="#86b4ee"><path d="M1 1 H7 L5 3 L8.5 6.5 L6.5 8.5 L3 5 L1 7 Z"/><path d="M20 1 H14 L16 3 L12.5 6.5 L14.5 8.5 L18 5 L20 7 Z"/><path d="M1 19 H7 L5 17 L8.5 13.5 L6.5 11.5 L3 15 L1 13 Z"/><path d="M20 19 H14 L16 17 L12.5 13.5 L14.5 11.5 L18 15 L20 13 Z"/></g></svg><svg class="a" style="left:2534px;top:40px;" width="19" height="20" viewBox="0 0 19 20"><rect x="0" y="0" width="19" height="20" fill="#7fb0ee"/><rect x="4" y="7.5" width="11" height="5" fill="none" stroke="#fff" stroke-width="1" opacity="0.95"/></svg><div class="a" style="left:0px;top:220px;width:2560px;height:1131px;background:#ffffff"></div><div class="a" style="left:0px;top:220px;width:437px;height:1131px;background:#f0f0f0"></div><div class="a" style="left:6.3px;top:222.3px;width:34px;height:564px;background:#dcdcdc;border:1px solid #b9b9b9;border-right:none;border-radius:4px 0 0 4px;box-sizing:border-box"></div><div class="a" style="left:3.5px;top:787.5px;width:37px;height:563px;background:linear-gradient(90deg,#f7f7f7,#efefef);border:1.5px solid #b9b9b9;border-right:none;border-radius:4px 0 0 4px;box-sizing:border-box"></div><div class="a t" style="left:-0.5px;top:483px;width:50px;height:18px;line-height:18px;font-size:12px;color:#111;text-align:center;transform:rotate(-90deg)">Designer</div><div class="a t" style="left:-2.2px;top:1047.3px;width:50px;height:18px;line-height:18px;font-size:12px;color:#111;text-align:center;transform:rotate(-90deg)">Viewer</div><svg class="a" style="left:11.5px;top:750px;" width="21" height="21" viewBox="0 0 21 21"><defs><radialGradient id="gy" cx="50%" cy="50%" r="50%"><stop offset="0" stop-color="#444"/><stop offset="1" stop-color="#000"/></radialGradient></defs><circle cx="10.5" cy="10.5" r="10" fill="url(#gy)" stroke="#d8d000" stroke-width="0.8"/><path d="M9.8 2 Q13.4 3.8 9.8 5.5 T9.8 9 T9.8 12.5 T9.8 16 T9.8 19.3" fill="none" stroke="#f0e400" stroke-width="1.3"/><path d="M16.6 8.3 L17.4 10 L19.2 10.2 L17.9 11.4 L18.3 13.2 L16.6 12.3 L14.9 13.2 L15.3 11.4 L14 10.2 L15.8 10 Z" fill="#f0e400"/></svg><svg class="a" style="left:10px;top:1314px;" width="22" height="22" viewBox="0 0 22 22"><defs><radialGradient id="gg" cx="50%" cy="50%" r="50%"><stop offset="0" stop-color="#333"/><stop offset="1" stop-color="#000"/></radialGradient></defs><circle cx="11" cy="11" r="10.3" fill="url(#gg)" stroke="#22c022" stroke-width="0.9"/><path d="M8 3 L13 4 L15 10 L12 18 L7 19 L5 13 Z" fill="#22e022"/><path d="M12 7 L16 8 L17 14 L14 19 L11 17 Z" fill="#1cc81c"/></svg><div class="a" style="left:40px;top:222px;width:1.5px;height:1128px;background:#bdbdbd"></div><div class="a" style="left:41.5px;top:222.3px;width:389px;height:1.2px;background:#c8c8c8"></div><div class="a" style="left:429px;top:222.3px;width:1.6px;height:1128px;background:#c4c4c4"></div><div class="a" style="left:41.5px;top:1348.3px;width:389px;height:1.6px;background:#c4c4c4"></div><div class="a" style="left:41.5px;top:223.5px;width:387.5px;height:38.5px;background:#efefef"></div><svg class="a" style="left:49px;top:231px;" width="23" height="22" viewBox="0 0 23 22"><path d="M1 2 Q1 1 2 1 H21 Q22 1 22 2 V3 L14 11 V21 L9 17 V11 L1 3 Z" fill="#d9d0f2"/></svg><div class="a" style="left:75.4px;top:227.5px;width:270px;height:29px;background:#fff;border:1.5px solid #b2b2b2;border-radius:4px;box-sizing:border-box"></div><div class="a t" style="left:80.5px;top:236.6px;line-height:12px;font-size:12px;color:#7a7a7a;font-weight:normal;">&lt;filter&gt;</div><div class="a" style="left:350.4px;top:227.5px;width:31px;height:30.1px;background:linear-gradient(#fbfbfb,#ececec);border:1.5px solid #b2b2b2;border-radius:4px;box-sizing:border-box"></div><svg class="a" style="left:354.7px;top:231.4px" width="22.5" height="22.5" viewBox="0 0 20 20"><g fill="#86b4ee"><path d="M7.5 7.5 H2.5 L4 6 L1 3 L3 1 L6 4 L7.5 2.5 Z"/><path d="M12.5 7.5 H17.5 L16 6 L19 3 L17 1 L14 4 L12.5 2.5 Z"/><path d="M7.5 12.5 H2.5 L4 14 L1 17 L3 19 L6 16 L7.5 17.5 Z"/><path d="M12.5 12.5 H17.5 L16 14 L19 17 L17 19 L14 16 L12.5 17.5 Z"/></g></svg><div class="a" style="left:386.3px;top:227.5px;width:31px;height:30.1px;background:linear-gradient(#fbfbfb,#ececec);border:1.5px solid #b2b2b2;border-radius:4px;box-sizing:border-box"></div><svg class="a" style="left:390.6px;top:231.4px" width="22.5" height="22.5" viewBox="0 0 20 20"><g fill="#86b4ee"><path d="M1 1 H6.5 L5 2.5 L8 5.5 L6 7.5 L3 4.5 L1 6 Z"/><path d="M19 1 H13.5 L15 2.5 L12 5.5 L14 7.5 L17 4.5 L19 6 Z"/><path d="M1 19 H6.5 L5 17.5 L8 14.5 L6 12.5 L3 15.5 L1 14 Z"/><path d="M19 19 H13.5 L15 17.5 L12 14.5 L14 12.5 L17 15.5 L19 14 Z"/></g></svg><div class="a" style="left:41.5px;top:262px;width:366px;height:1086.3px;background:#fff"></div><div class="a" style="left:407.5px;top:262px;width:21.5px;height:1086.3px;background:#eeeeee"></div><div class="a" style="left:407.5px;top:262px;width:18px;height:17.5px;background:linear-gradient(90deg,#fdfdfd,#f1f1f1);border-left:1px solid #dcdcdc;box-sizing:border-box"></div><svg class="a" style="left:411px;top:268px;" width="12" height="6" viewBox="0 0 12 6"><path d="M0.5 5.5 L6 0.5 L11.5 5.5 Z" fill="#5a5a5a"/></svg><div class="a" style="left:407.5px;top:279px;width:18px;height:1px;background:#c4c4c4"></div><div class="a" style="left:407.5px;top:280px;width:18px;height:192.5px;background:#e3e3e3;border-left:1px solid #d2d2d2;box-sizing:border-box"></div><div class="a" style="left:407.5px;top:472px;width:18px;height:1px;background:#c0c0c0"></div><div class="a" style="left:407.5px;top:473px;width:18px;height:531px;background:linear-gradient(90deg,#fbfbfb,#f0f0f0);border-left:1px solid #dcdcdc;box-sizing:border-box"></div><div class="a" style="left:407.5px;top:1004px;width:18px;height:1px;background:#c0c0c0"></div><div class="a" style="left:407.5px;top:1005px;width:18px;height:322px;background:#e3e3e3;border-left:1px solid #d2d2d2;box-sizing:border-box"></div><div class="a" style="left:407.5px;top:1327px;width:18px;height:1px;background:#c4c4c4"></div><div class="a" style="left:407.5px;top:1328px;width:18px;height:19px;background:linear-gradient(90deg,#fdfdfd,#f1f1f1);border-left:1px solid #dcdcdc;box-sizing:border-box"></div><svg class="a" style="left:411px;top:1334px;" width="12" height="6" viewBox="0 0 12 6"><path d="M0.5 0.5 L6 5.5 L11.5 0.5 Z" fill="#5a5a5a"/></svg><div class="a" style="left:42px;top:870px;width:365.3px;height:64px;background:#3189c9"></div><div class="a" style="left:175.5px;top:934px;width:231.8px;height:31.7px;background:#3189c9"></div><svg class="a" style="left:0;top:0" width="0" height="0"><defs><radialGradient id="ti" cx="50%" cy="50%" r="50%"><stop offset="0" stop-color="#3a3a3a"/><stop offset="0.7" stop-color="#161616"/><stop offset="1" stop-color="#000"/></radialGradient><radialGradient id="tis" cx="50%" cy="50%" r="50%"><stop offset="0" stop-color="#3f6f95"/><stop offset="1" stop-color="#1a3550"/></radialGradient></defs></svg><div class="a" style="left:41.5px;top:262px;width:366px;height:1086px;overflow:hidden"><svg class="a" style="left:114.3px;top:10.8px" width="6" height="11" viewBox="0 0 6 11"><path d="M0.2 0 L5.5 5.3 L0.2 10.6 Z" fill="#606060"/></svg><svg class="a" style="left:137.9px;top:1.4px" width="30" height="30" viewBox="0 0 30 30"><circle cx="14.7" cy="14.7" r="14" fill="url(#ti)" stroke="#1ec81e" stroke-width="1"/><path d="M2.9 19 H7.3 C8.5 19 9 14.4 10 14.4 C11 14.4 11.3 18.8 12 18.8 C12.8 18.8 13.5 10.5 14.4 10.5 C15.3 10.5 16.2 18.8 17 18.8 C17.8 18.8 18.4 13.2 19.2 13.2 C20.1 13.2 20.8 18.8 22 18.8 H26.3" fill="none" stroke="#14dc14" stroke-width="1.6" stroke-linejoin="round"/><circle cx="14.4" cy="9.9" r="3.6" fill="none" stroke="#18b8c0" stroke-width="1.2"/><ellipse cx="14.4" cy="10.4" rx="1.2" ry="1.6" fill="#14dc14"/></svg><div class="a t" style="left:175.5px;top:8.9px;font-size:16.2px;line-height:16.2px;color:#1a1a1a;transform:scaleX(0.935);transform-origin:0 0">3 C20-IVG</div><svg class="a" style="left:114.3px;top:42.8px" width="6" height="11" viewBox="0 0 6 11"><path d="M0.2 0 L5.5 5.3 L0.2 10.6 Z" fill="#606060"/></svg><svg class="a" style="left:137.9px;top:33.4px" width="30" height="30" viewBox="0 0 30 30"><circle cx="14.7" cy="14.7" r="14" fill="url(#ti)" stroke="#1ec81e" stroke-width="1"/><path d="M2.9 19 H7.3 C8.5 19 9 14.4 10 14.4 C11 14.4 11.3 18.8 12 18.8 C12.8 18.8 13.5 10.5 14.4 10.5 C15.3 10.5 16.2 18.8 17 18.8 C17.8 18.8 18.4 13.2 19.2 13.2 C20.1 13.2 20.8 18.8 22 18.8 H26.3" fill="none" stroke="#14dc14" stroke-width="1.6" stroke-linejoin="round"/><circle cx="14.4" cy="9.9" r="3.6" fill="none" stroke="#18b8c0" stroke-width="1.2"/><ellipse cx="14.4" cy="10.4" rx="1.2" ry="1.6" fill="#14dc14"/></svg><div class="a t" style="left:175.5px;top:40.9px;font-size:16.2px;line-height:16.2px;color:#1a1a1a;transform:scaleX(0.935);transform-origin:0 0">4 A23-IVG</div><svg class="a" style="left:114.3px;top:74.8px" width="6" height="11" viewBox="0 0 6 11"><path d="M0.2 0 L5.5 5.3 L0.2 10.6 Z" fill="#606060"/></svg><svg class="a" style="left:137.9px;top:65.4px" width="30" height="30" viewBox="0 0 30 30"><circle cx="14.7" cy="14.7" r="14" fill="url(#ti)" stroke="#1ec81e" stroke-width="1"/><path d="M2.9 19 H7.3 C8.5 19 9 14.4 10 14.4 C11 14.4 11.3 18.8 12 18.8 C12.8 18.8 13.5 10.5 14.4 10.5 C15.3 10.5 16.2 18.8 17 18.8 C17.8 18.8 18.4 13.2 19.2 13.2 C20.1 13.2 20.8 18.8 22 18.8 H26.3" fill="none" stroke="#14dc14" stroke-width="1.6" stroke-linejoin="round"/><circle cx="14.4" cy="9.9" r="3.6" fill="none" stroke="#18b8c0" stroke-width="1.2"/><ellipse cx="14.4" cy="10.4" rx="1.2" ry="1.6" fill="#14dc14"/></svg><div class="a t" style="left:175.5px;top:72.9px;font-size:16.2px;line-height:16.2px;color:#1a1a1a;transform:scaleX(0.935);transform-origin:0 0">5 B23-IVG</div><svg class="a" style="left:114.3px;top:106.8px" width="6" height="11" viewBox="0 0 6 11"><path d="M0.2 0 L5.5 5.3 L0.2 10.6 Z" fill="#606060"/></svg><svg class="a" style="left:137.9px;top:97.4px" width="30" height="30" viewBox="0 0 30 30"><circle cx="14.7" cy="14.7" r="14" fill="url(#ti)" stroke="#1ec81e" stroke-width="1"/><path d="M2.9 19 H7.3 C8.5 19 9 14.4 10 14.4 C11 14.4 11.3 18.8 12 18.8 C12.8 18.8 13.5 10.5 14.4 10.5 C15.3 10.5 16.2 18.8 17 18.8 C17.8 18.8 18.4 13.2 19.2 13.2 C20.1 13.2 20.8 18.8 22 18.8 H26.3" fill="none" stroke="#14dc14" stroke-width="1.6" stroke-linejoin="round"/><circle cx="14.4" cy="9.9" r="3.6" fill="none" stroke="#18b8c0" stroke-width="1.2"/><ellipse cx="14.4" cy="10.4" rx="1.2" ry="1.6" fill="#14dc14"/></svg><div class="a t" style="left:175.5px;top:104.9px;font-size:16.2px;line-height:16.2px;color:#1a1a1a;transform:scaleX(0.935);transform-origin:0 0">6 C23-IVG</div><svg class="a" style="left:114.3px;top:138.8px" width="6" height="11" viewBox="0 0 6 11"><path d="M0.2 0 L5.5 5.3 L0.2 10.6 Z" fill="#606060"/></svg><svg class="a" style="left:137.9px;top:129.4px" width="30" height="30" viewBox="0 0 30 30"><circle cx="14.7" cy="14.7" r="14" fill="url(#ti)" stroke="#1ec81e" stroke-width="1"/><path d="M2.9 19 H7.3 C8.5 19 9 14.4 10 14.4 C11 14.4 11.3 18.8 12 18.8 C12.8 18.8 13.5 10.5 14.4 10.5 C15.3 10.5 16.2 18.8 17 18.8 C17.8 18.8 18.4 13.2 19.2 13.2 C20.1 13.2 20.8 18.8 22 18.8 H26.3" fill="none" stroke="#14dc14" stroke-width="1.6" stroke-linejoin="round"/><circle cx="14.4" cy="9.9" r="3.6" fill="none" stroke="#18b8c0" stroke-width="1.2"/><ellipse cx="14.4" cy="10.4" rx="1.2" ry="1.6" fill="#14dc14"/></svg><div class="a t" style="left:175.5px;top:136.9px;font-size:16.2px;line-height:16.2px;color:#1a1a1a;transform:scaleX(0.935);transform-origin:0 0">7 A26-IVG</div><svg class="a" style="left:114.3px;top:170.8px" width="6" height="11" viewBox="0 0 6 11"><path d="M0.2 0 L5.5 5.3 L0.2 10.6 Z" fill="#606060"/></svg><svg class="a" style="left:137.9px;top:161.4px" width="30" height="30" viewBox="0 0 30 30"><circle cx="14.7" cy="14.7" r="14" fill="url(#ti)" stroke="#1ec81e" stroke-width="1"/><path d="M2.9 19 H7.3 C8.5 19 9 14.4 10 14.4 C11 14.4 11.3 18.8 12 18.8 C12.8 18.8 13.5 10.5 14.4 10.5 C15.3 10.5 16.2 18.8 17 18.8 C17.8 18.8 18.4 13.2 19.2 13.2 C20.1 13.2 20.8 18.8 22 18.8 H26.3" fill="none" stroke="#14dc14" stroke-width="1.6" stroke-linejoin="round"/><circle cx="14.4" cy="9.9" r="3.6" fill="none" stroke="#18b8c0" stroke-width="1.2"/><ellipse cx="14.4" cy="10.4" rx="1.2" ry="1.6" fill="#14dc14"/></svg><div class="a t" style="left:175.5px;top:168.9px;font-size:16.2px;line-height:16.2px;color:#1a1a1a;transform:scaleX(0.935);transform-origin:0 0">8 B26-IVG</div><svg class="a" style="left:114.3px;top:202.8px" width="6" height="11" viewBox="0 0 6 11"><path d="M0.2 0 L5.5 5.3 L0.2 10.6 Z" fill="#606060"/></svg><svg class="a" style="left:137.9px;top:193.4px" width="30" height="30" viewBox="0 0 30 30"><circle cx="14.7" cy="14.7" r="14" fill="url(#ti)" stroke="#1ec81e" stroke-width="1"/><path d="M2.9 19 H7.3 C8.5 19 9 14.4 10 14.4 C11 14.4 11.3 18.8 12 18.8 C12.8 18.8 13.5 10.5 14.4 10.5 C15.3 10.5 16.2 18.8 17 18.8 C17.8 18.8 18.4 13.2 19.2 13.2 C20.1 13.2 20.8 18.8 22 18.8 H26.3" fill="none" stroke="#14dc14" stroke-width="1.6" stroke-linejoin="round"/><circle cx="14.4" cy="9.9" r="3.6" fill="none" stroke="#18b8c0" stroke-width="1.2"/><ellipse cx="14.4" cy="10.4" rx="1.2" ry="1.6" fill="#14dc14"/></svg><div class="a t" style="left:175.5px;top:200.9px;font-size:16.2px;line-height:16.2px;color:#1a1a1a;transform:scaleX(0.935);transform-origin:0 0">9 C26-IVG</div><svg class="a" style="left:114.3px;top:234.8px" width="6" height="11" viewBox="0 0 6 11"><path d="M0.2 0 L5.5 5.3 L0.2 10.6 Z" fill="#606060"/></svg><svg class="a" style="left:137.9px;top:225.4px" width="30" height="30" viewBox="0 0 30 30"><circle cx="14.7" cy="14.7" r="14" fill="url(#ti)" stroke="#1ec81e" stroke-width="1"/><path d="M2.9 19 H7.3 C8.5 19 9 14.4 10 14.4 C11 14.4 11.3 18.8 12 18.8 C12.8 18.8 13.5 10.5 14.4 10.5 C15.3 10.5 16.2 18.8 17 18.8 C17.8 18.8 18.4 13.2 19.2 13.2 C20.1 13.2 20.8 18.8 22 18.8 H26.3" fill="none" stroke="#14dc14" stroke-width="1.6" stroke-linejoin="round"/><circle cx="14.4" cy="9.9" r="3.6" fill="none" stroke="#18b8c0" stroke-width="1.2"/><ellipse cx="14.4" cy="10.4" rx="1.2" ry="1.6" fill="#14dc14"/></svg><div class="a t" style="left:175.5px;top:232.9px;font-size:16.2px;line-height:16.2px;color:#1a1a1a;transform:scaleX(0.935);transform-origin:0 0">10 A17T-IVG</div><svg class="a" style="left:114.3px;top:266.8px" width="6" height="11" viewBox="0 0 6 11"><path d="M0.2 0 L5.5 5.3 L0.2 10.6 Z" fill="#606060"/></svg><svg class="a" style="left:137.9px;top:257.4px" width="30" height="30" viewBox="0 0 30 30"><circle cx="14.7" cy="14.7" r="14" fill="url(#ti)" stroke="#1ec81e" stroke-width="1"/><path d="M2.9 19 H7.3 C8.5 19 9 14.4 10 14.4 C11 14.4 11.3 18.8 12 18.8 C12.8 18.8 13.5 10.5 14.4 10.5 C15.3 10.5 16.2 18.8 17 18.8 C17.8 18.8 18.4 13.2 19.2 13.2 C20.1 13.2 20.8 18.8 22 18.8 H26.3" fill="none" stroke="#14dc14" stroke-width="1.6" stroke-linejoin="round"/><circle cx="14.4" cy="9.9" r="3.6" fill="none" stroke="#18b8c0" stroke-width="1.2"/><ellipse cx="14.4" cy="10.4" rx="1.2" ry="1.6" fill="#14dc14"/></svg><div class="a t" style="left:175.5px;top:264.9px;font-size:16.2px;line-height:16.2px;color:#1a1a1a;transform:scaleX(0.935);transform-origin:0 0">11 B17T-IVG</div><svg class="a" style="left:114.3px;top:298.8px" width="6" height="11" viewBox="0 0 6 11"><path d="M0.2 0 L5.5 5.3 L0.2 10.6 Z" fill="#606060"/></svg><svg class="a" style="left:137.9px;top:289.4px" width="30" height="30" viewBox="0 0 30 30"><circle cx="14.7" cy="14.7" r="14" fill="url(#ti)" stroke="#1ec81e" stroke-width="1"/><path d="M2.9 19 H7.3 C8.5 19 9 14.4 10 14.4 C11 14.4 11.3 18.8 12 18.8 C12.8 18.8 13.5 10.5 14.4 10.5 C15.3 10.5 16.2 18.8 17 18.8 C17.8 18.8 18.4 13.2 19.2 13.2 C20.1 13.2 20.8 18.8 22 18.8 H26.3" fill="none" stroke="#14dc14" stroke-width="1.6" stroke-linejoin="round"/><circle cx="14.4" cy="9.9" r="3.6" fill="none" stroke="#18b8c0" stroke-width="1.2"/><ellipse cx="14.4" cy="10.4" rx="1.2" ry="1.6" fill="#14dc14"/></svg><div class="a t" style="left:175.5px;top:296.9px;font-size:16.2px;line-height:16.2px;color:#1a1a1a;transform:scaleX(0.935);transform-origin:0 0">12 C17T-IVG</div><svg class="a" style="left:114.3px;top:330.8px" width="6" height="11" viewBox="0 0 6 11"><path d="M0.2 0 L5.5 5.3 L0.2 10.6 Z" fill="#606060"/></svg><svg class="a" style="left:137.9px;top:321.4px" width="30" height="30" viewBox="0 0 30 30"><circle cx="14.7" cy="14.7" r="14" fill="url(#ti)" stroke="#1ec81e" stroke-width="1"/><path d="M2.9 19 H7.3 C8.5 19 9 14.4 10 14.4 C11 14.4 11.3 18.8 12 18.8 C12.8 18.8 13.5 10.5 14.4 10.5 C15.3 10.5 16.2 18.8 17 18.8 C17.8 18.8 18.4 13.2 19.2 13.2 C20.1 13.2 20.8 18.8 22 18.8 H26.3" fill="none" stroke="#14dc14" stroke-width="1.6" stroke-linejoin="round"/><circle cx="14.4" cy="9.9" r="3.6" fill="none" stroke="#18b8c0" stroke-width="1.2"/><ellipse cx="14.4" cy="10.4" rx="1.2" ry="1.6" fill="#14dc14"/></svg><div class="a t" style="left:175.5px;top:328.9px;font-size:16.2px;line-height:16.2px;color:#1a1a1a;transform:scaleX(0.935);transform-origin:0 0">13 A18-VGV-0</div><svg class="a" style="left:114.3px;top:362.8px" width="6" height="11" viewBox="0 0 6 11"><path d="M0.2 0 L5.5 5.3 L0.2 10.6 Z" fill="#606060"/></svg><svg class="a" style="left:137.9px;top:353.4px" width="30" height="30" viewBox="0 0 30 30"><circle cx="14.7" cy="14.7" r="14" fill="url(#ti)" stroke="#1ec81e" stroke-width="1"/><path d="M2.9 19 H7.3 C8.5 19 9 14.4 10 14.4 C11 14.4 11.3 18.8 12 18.8 C12.8 18.8 13.5 10.5 14.4 10.5 C15.3 10.5 16.2 18.8 17 18.8 C17.8 18.8 18.4 13.2 19.2 13.2 C20.1 13.2 20.8 18.8 22 18.8 H26.3" fill="none" stroke="#14dc14" stroke-width="1.6" stroke-linejoin="round"/><circle cx="14.4" cy="9.9" r="3.6" fill="none" stroke="#18b8c0" stroke-width="1.2"/><ellipse cx="14.4" cy="10.4" rx="1.2" ry="1.6" fill="#14dc14"/></svg><div class="a t" style="left:175.5px;top:360.9px;font-size:16.2px;line-height:16.2px;color:#1a1a1a;transform:scaleX(0.935);transform-origin:0 0">14 B18-VGV-0</div><svg class="a" style="left:114.3px;top:394.8px" width="6" height="11" viewBox="0 0 6 11"><path d="M0.2 0 L5.5 5.3 L0.2 10.6 Z" fill="#606060"/></svg><svg class="a" style="left:137.9px;top:385.4px" width="30" height="30" viewBox="0 0 30 30"><circle cx="14.7" cy="14.7" r="14" fill="url(#ti)" stroke="#1ec81e" stroke-width="1"/><path d="M2.9 19 H7.3 C8.5 19 9 14.4 10 14.4 C11 14.4 11.3 18.8 12 18.8 C12.8 18.8 13.5 10.5 14.4 10.5 C15.3 10.5 16.2 18.8 17 18.8 C17.8 18.8 18.4 13.2 19.2 13.2 C20.1 13.2 20.8 18.8 22 18.8 H26.3" fill="none" stroke="#14dc14" stroke-width="1.6" stroke-linejoin="round"/><circle cx="14.4" cy="9.9" r="3.6" fill="none" stroke="#18b8c0" stroke-width="1.2"/><ellipse cx="14.4" cy="10.4" rx="1.2" ry="1.6" fill="#14dc14"/></svg><div class="a t" style="left:175.5px;top:392.9px;font-size:16.2px;line-height:16.2px;color:#1a1a1a;transform:scaleX(0.935);transform-origin:0 0">15 C18-VGV-0</div><svg class="a" style="left:114.3px;top:426.8px" width="6" height="11" viewBox="0 0 6 11"><path d="M0.2 0 L5.5 5.3 L0.2 10.6 Z" fill="#606060"/></svg><svg class="a" style="left:137.9px;top:417.4px" width="30" height="30" viewBox="0 0 30 30"><circle cx="14.7" cy="14.7" r="14" fill="url(#ti)" stroke="#1ec81e" stroke-width="1"/><path d="M2.9 19 H7.3 C8.5 19 9 14.4 10 14.4 C11 14.4 11.3 18.8 12 18.8 C12.8 18.8 13.5 10.5 14.4 10.5 C15.3 10.5 16.2 18.8 17 18.8 C17.8 18.8 18.4 13.2 19.2 13.2 C20.1 13.2 20.8 18.8 22 18.8 H26.3" fill="none" stroke="#14dc14" stroke-width="1.6" stroke-linejoin="round"/><circle cx="14.4" cy="9.9" r="3.6" fill="none" stroke="#18b8c0" stroke-width="1.2"/><ellipse cx="14.4" cy="10.4" rx="1.2" ry="1.6" fill="#14dc14"/></svg><div class="a t" style="left:175.5px;top:424.9px;font-size:16.2px;line-height:16.2px;color:#1a1a1a;transform:scaleX(0.935);transform-origin:0 0">16 A21-VGV-0</div><svg class="a" style="left:114.3px;top:458.8px" width="6" height="11" viewBox="0 0 6 11"><path d="M0.2 0 L5.5 5.3 L0.2 10.6 Z" fill="#606060"/></svg><svg class="a" style="left:137.9px;top:449.4px" width="30" height="30" viewBox="0 0 30 30"><circle cx="14.7" cy="14.7" r="14" fill="url(#ti)" stroke="#1ec81e" stroke-width="1"/><path d="M2.9 19 H7.3 C8.5 19 9 14.4 10 14.4 C11 14.4 11.3 18.8 12 18.8 C12.8 18.8 13.5 10.5 14.4 10.5 C15.3 10.5 16.2 18.8 17 18.8 C17.8 18.8 18.4 13.2 19.2 13.2 C20.1 13.2 20.8 18.8 22 18.8 H26.3" fill="none" stroke="#14dc14" stroke-width="1.6" stroke-linejoin="round"/><circle cx="14.4" cy="9.9" r="3.6" fill="none" stroke="#18b8c0" stroke-width="1.2"/><ellipse cx="14.4" cy="10.4" rx="1.2" ry="1.6" fill="#14dc14"/></svg><div class="a t" style="left:175.5px;top:456.9px;font-size:16.2px;line-height:16.2px;color:#1a1a1a;transform:scaleX(0.935);transform-origin:0 0">17 B21-VGV-0</div><svg class="a" style="left:114.3px;top:490.8px" width="6" height="11" viewBox="0 0 6 11"><path d="M0.2 0 L5.5 5.3 L0.2 10.6 Z" fill="#606060"/></svg><svg class="a" style="left:137.9px;top:481.4px" width="30" height="30" viewBox="0 0 30 30"><circle cx="14.7" cy="14.7" r="14" fill="url(#ti)" stroke="#1ec81e" stroke-width="1"/><path d="M2.9 19 H7.3 C8.5 19 9 14.4 10 14.4 C11 14.4 11.3 18.8 12 18.8 C12.8 18.8 13.5 10.5 14.4 10.5 C15.3 10.5 16.2 18.8 17 18.8 C17.8 18.8 18.4 13.2 19.2 13.2 C20.1 13.2 20.8 18.8 22 18.8 H26.3" fill="none" stroke="#14dc14" stroke-width="1.6" stroke-linejoin="round"/><circle cx="14.4" cy="9.9" r="3.6" fill="none" stroke="#18b8c0" stroke-width="1.2"/><ellipse cx="14.4" cy="10.4" rx="1.2" ry="1.6" fill="#14dc14"/></svg><div class="a t" style="left:175.5px;top:488.9px;font-size:16.2px;line-height:16.2px;color:#1a1a1a;transform:scaleX(0.935);transform-origin:0 0">18 C24-VGV-0</div><svg class="a" style="left:114.3px;top:522.8px" width="6" height="11" viewBox="0 0 6 11"><path d="M0.2 0 L5.5 5.3 L0.2 10.6 Z" fill="#606060"/></svg><svg class="a" style="left:137.9px;top:513.4px" width="30" height="30" viewBox="0 0 30 30"><circle cx="14.7" cy="14.7" r="14" fill="url(#ti)" stroke="#1ec81e" stroke-width="1"/><path d="M2.9 19 H7.3 C8.5 19 9 14.4 10 14.4 C11 14.4 11.3 18.8 12 18.8 C12.8 18.8 13.5 10.5 14.4 10.5 C15.3 10.5 16.2 18.8 17 18.8 C17.8 18.8 18.4 13.2 19.2 13.2 C20.1 13.2 20.8 18.8 22 18.8 H26.3" fill="none" stroke="#14dc14" stroke-width="1.6" stroke-linejoin="round"/><circle cx="14.4" cy="9.9" r="3.6" fill="none" stroke="#18b8c0" stroke-width="1.2"/><ellipse cx="14.4" cy="10.4" rx="1.2" ry="1.6" fill="#14dc14"/></svg><div class="a t" style="left:175.5px;top:520.9px;font-size:16.2px;line-height:16.2px;color:#1a1a1a;transform:scaleX(0.935);transform-origin:0 0">19 C27-VGV-0</div><svg class="a" style="left:114.3px;top:554.8px" width="6" height="11" viewBox="0 0 6 11"><path d="M0.2 0 L5.5 5.3 L0.2 10.6 Z" fill="#606060"/></svg><svg class="a" style="left:137.9px;top:545.4px" width="30" height="30" viewBox="0 0 30 30"><circle cx="14.7" cy="14.7" r="14" fill="url(#ti)" stroke="#1ec81e" stroke-width="1"/><path d="M2.9 19 H7.3 C8.5 19 9 14.4 10 14.4 C11 14.4 11.3 18.8 12 18.8 C12.8 18.8 13.5 10.5 14.4 10.5 C15.3 10.5 16.2 18.8 17 18.8 C17.8 18.8 18.4 13.2 19.2 13.2 C20.1 13.2 20.8 18.8 22 18.8 H26.3" fill="none" stroke="#14dc14" stroke-width="1.6" stroke-linejoin="round"/><circle cx="14.4" cy="9.9" r="3.6" fill="none" stroke="#18b8c0" stroke-width="1.2"/><ellipse cx="14.4" cy="10.4" rx="1.2" ry="1.6" fill="#14dc14"/></svg><div class="a t" style="left:175.5px;top:552.9px;font-size:16.2px;line-height:16.2px;color:#1a1a1a;transform:scaleX(0.935);transform-origin:0 0">20 A27T-VGV-0</div><svg class="a" style="left:114.3px;top:586.8px" width="6" height="11" viewBox="0 0 6 11"><path d="M0.2 0 L5.5 5.3 L0.2 10.6 Z" fill="#606060"/></svg><svg class="a" style="left:137.9px;top:577.4px" width="30" height="30" viewBox="0 0 30 30"><circle cx="14.7" cy="14.7" r="14" fill="url(#ti)" stroke="#1ec81e" stroke-width="1"/><path d="M2.9 19 H7.3 C8.5 19 9 14.4 10 14.4 C11 14.4 11.3 18.8 12 18.8 C12.8 18.8 13.5 10.5 14.4 10.5 C15.3 10.5 16.2 18.8 17 18.8 C17.8 18.8 18.4 13.2 19.2 13.2 C20.1 13.2 20.8 18.8 22 18.8 H26.3" fill="none" stroke="#14dc14" stroke-width="1.6" stroke-linejoin="round"/><circle cx="14.4" cy="9.9" r="3.6" fill="none" stroke="#18b8c0" stroke-width="1.2"/><ellipse cx="14.4" cy="10.4" rx="1.2" ry="1.6" fill="#14dc14"/></svg><div class="a t" style="left:175.5px;top:584.9px;font-size:16.2px;line-height:16.2px;color:#1a1a1a;transform:scaleX(0.935);transform-origin:0 0">21 B27X-VGV-0</div><svg class="a" style="left:114.3px;top:618.8px" width="6" height="11" viewBox="0 0 6 11"><path d="M0.2 0 L5.5 5.3 L0.2 10.6 Z" fill="#2a3a4a"/></svg><svg class="a" style="left:137.9px;top:609.4px" width="30" height="30" viewBox="0 0 30 30"><circle cx="14.7" cy="14.7" r="14" fill="url(#tis)" stroke="#1ec81e" stroke-width="1"/><path d="M2.9 19 H7.3 C8.5 19 9 14.4 10 14.4 C11 14.4 11.3 18.8 12 18.8 C12.8 18.8 13.5 10.5 14.4 10.5 C15.3 10.5 16.2 18.8 17 18.8 C17.8 18.8 18.4 13.2 19.2 13.2 C20.1 13.2 20.8 18.8 22 18.8 H26.3" fill="none" stroke="#14dc14" stroke-width="1.6" stroke-linejoin="round"/><circle cx="14.4" cy="9.9" r="3.6" fill="none" stroke="#18b8c0" stroke-width="1.2"/><ellipse cx="14.4" cy="10.4" rx="1.2" ry="1.6" fill="#14dc14"/></svg><div class="a t" style="left:175.5px;top:616.9px;font-size:16.2px;line-height:16.2px;color:#f4f4f4;transform:scaleX(0.935);transform-origin:0 0">22 A22-VGV-1</div><svg class="a" style="left:114.3px;top:650.8px" width="6" height="11" viewBox="0 0 6 11"><path d="M0.2 0 L5.5 5.3 L0.2 10.6 Z" fill="#2a3a4a"/></svg><svg class="a" style="left:137.9px;top:641.4px" width="30" height="30" viewBox="0 0 30 30"><circle cx="14.7" cy="14.7" r="14" fill="url(#tis)" stroke="#1ec81e" stroke-width="1"/><path d="M2.9 19 H7.3 C8.5 19 9 14.4 10 14.4 C11 14.4 11.3 18.8 12 18.8 C12.8 18.8 13.5 10.5 14.4 10.5 C15.3 10.5 16.2 18.8 17 18.8 C17.8 18.8 18.4 13.2 19.2 13.2 C20.1 13.2 20.8 18.8 22 18.8 H26.3" fill="none" stroke="#14dc14" stroke-width="1.6" stroke-linejoin="round"/><circle cx="14.4" cy="9.9" r="3.6" fill="none" stroke="#18b8c0" stroke-width="1.2"/><ellipse cx="14.4" cy="10.4" rx="1.2" ry="1.6" fill="#14dc14"/></svg><div class="a t" style="left:175.5px;top:648.9px;font-size:16.2px;line-height:16.2px;color:#f4f4f4;transform:scaleX(0.935);transform-origin:0 0">23 C22-VGV-1</div><svg class="a" style="left:114.3px;top:682.8px" width="6" height="11" viewBox="0 0 6 11"><path d="M0.2 0 L5.5 5.3 L0.2 10.6 Z" fill="#606060"/></svg><svg class="a" style="left:137.9px;top:673.4px" width="30" height="30" viewBox="0 0 30 30"><circle cx="14.7" cy="14.7" r="14" fill="url(#ti)" stroke="#1ec81e" stroke-width="1"/><path d="M2.9 19 H7.3 C8.5 19 9 14.4 10 14.4 C11 14.4 11.3 18.8 12 18.8 C12.8 18.8 13.5 10.5 14.4 10.5 C15.3 10.5 16.2 18.8 17 18.8 C17.8 18.8 18.4 13.2 19.2 13.2 C20.1 13.2 20.8 18.8 22 18.8 H26.3" fill="none" stroke="#14dc14" stroke-width="1.6" stroke-linejoin="round"/><circle cx="14.4" cy="9.9" r="3.6" fill="none" stroke="#18b8c0" stroke-width="1.2"/><ellipse cx="14.4" cy="10.4" rx="1.2" ry="1.6" fill="#14dc14"/></svg><div class="a t" style="left:175.5px;top:680.9px;font-size:16.2px;line-height:16.2px;color:#1a1a1a;transform:scaleX(0.935);transform-origin:0 0">24 A24-VGV-1</div><svg class="a" style="left:114.3px;top:714.8px" width="6" height="11" viewBox="0 0 6 11"><path d="M0.2 0 L5.5 5.3 L0.2 10.6 Z" fill="#606060"/></svg><svg class="a" style="left:137.9px;top:705.4px" width="30" height="30" viewBox="0 0 30 30"><circle cx="14.7" cy="14.7" r="14" fill="url(#ti)" stroke="#1ec81e" stroke-width="1"/><path d="M2.9 19 H7.3 C8.5 19 9 14.4 10 14.4 C11 14.4 11.3 18.8 12 18.8 C12.8 18.8 13.5 10.5 14.4 10.5 C15.3 10.5 16.2 18.8 17 18.8 C17.8 18.8 18.4 13.2 19.2 13.2 C20.1 13.2 20.8 18.8 22 18.8 H26.3" fill="none" stroke="#14dc14" stroke-width="1.6" stroke-linejoin="round"/><circle cx="14.4" cy="9.9" r="3.6" fill="none" stroke="#18b8c0" stroke-width="1.2"/><ellipse cx="14.4" cy="10.4" rx="1.2" ry="1.6" fill="#14dc14"/></svg><div class="a t" style="left:175.5px;top:712.9px;font-size:16.2px;line-height:16.2px;color:#1a1a1a;transform:scaleX(0.935);transform-origin:0 0">25 B24-VGV-1</div><svg class="a" style="left:114.3px;top:746.8px" width="6" height="11" viewBox="0 0 6 11"><path d="M0.2 0 L5.5 5.3 L0.2 10.6 Z" fill="#606060"/></svg><svg class="a" style="left:137.9px;top:737.4px" width="30" height="30" viewBox="0 0 30 30"><circle cx="14.7" cy="14.7" r="14" fill="url(#ti)" stroke="#1ec81e" stroke-width="1"/><path d="M2.9 19 H7.3 C8.5 19 9 14.4 10 14.4 C11 14.4 11.3 18.8 12 18.8 C12.8 18.8 13.5 10.5 14.4 10.5 C15.3 10.5 16.2 18.8 17 18.8 C17.8 18.8 18.4 13.2 19.2 13.2 C20.1 13.2 20.8 18.8 22 18.8 H26.3" fill="none" stroke="#14dc14" stroke-width="1.6" stroke-linejoin="round"/><circle cx="14.4" cy="9.9" r="3.6" fill="none" stroke="#18b8c0" stroke-width="1.2"/><ellipse cx="14.4" cy="10.4" rx="1.2" ry="1.6" fill="#14dc14"/></svg><div class="a t" style="left:175.5px;top:744.9px;font-size:16.2px;line-height:16.2px;color:#1a1a1a;transform:scaleX(0.935);transform-origin:0 0">26 C24-VGV-1</div><svg class="a" style="left:114.3px;top:778.8px" width="6" height="11" viewBox="0 0 6 11"><path d="M0.2 0 L5.5 5.3 L0.2 10.6 Z" fill="#606060"/></svg><svg class="a" style="left:137.9px;top:769.4px" width="30" height="30" viewBox="0 0 30 30"><circle cx="14.7" cy="14.7" r="14" fill="url(#ti)" stroke="#1ec81e" stroke-width="1"/><path d="M2.9 19 H7.3 C8.5 19 9 14.4 10 14.4 C11 14.4 11.3 18.8 12 18.8 C12.8 18.8 13.5 10.5 14.4 10.5 C15.3 10.5 16.2 18.8 17 18.8 C17.8 18.8 18.4 13.2 19.2 13.2 C20.1 13.2 20.8 18.8 22 18.8 H26.3" fill="none" stroke="#14dc14" stroke-width="1.6" stroke-linejoin="round"/><circle cx="14.4" cy="9.9" r="3.6" fill="none" stroke="#18b8c0" stroke-width="1.2"/><ellipse cx="14.4" cy="10.4" rx="1.2" ry="1.6" fill="#14dc14"/></svg><div class="a t" style="left:175.5px;top:776.9px;font-size:16.2px;line-height:16.2px;color:#1a1a1a;transform:scaleX(0.935);transform-origin:0 0">27 A26-VGV-1</div><svg class="a" style="left:114.3px;top:810.8px" width="6" height="11" viewBox="0 0 6 11"><path d="M0.2 0 L5.5 5.3 L0.2 10.6 Z" fill="#606060"/></svg><svg class="a" style="left:137.9px;top:801.4px" width="30" height="30" viewBox="0 0 30 30"><circle cx="14.7" cy="14.7" r="14" fill="url(#ti)" stroke="#1ec81e" stroke-width="1"/><path d="M2.9 19 H7.3 C8.5 19 9 14.4 10 14.4 C11 14.4 11.3 18.8 12 18.8 C12.8 18.8 13.5 10.5 14.4 10.5 C15.3 10.5 16.2 18.8 17 18.8 C17.8 18.8 18.4 13.2 19.2 13.2 C20.1 13.2 20.8 18.8 22 18.8 H26.3" fill="none" stroke="#14dc14" stroke-width="1.6" stroke-linejoin="round"/><circle cx="14.4" cy="9.9" r="3.6" fill="none" stroke="#18b8c0" stroke-width="1.2"/><ellipse cx="14.4" cy="10.4" rx="1.2" ry="1.6" fill="#14dc14"/></svg><div class="a t" style="left:175.5px;top:808.9px;font-size:16.2px;line-height:16.2px;color:#1a1a1a;transform:scaleX(0.935);transform-origin:0 0">28 B26-VGV-1</div><svg class="a" style="left:114.3px;top:842.8px" width="6" height="11" viewBox="0 0 6 11"><path d="M0.2 0 L5.5 5.3 L0.2 10.6 Z" fill="#606060"/></svg><svg class="a" style="left:137.9px;top:833.4px" width="30" height="30" viewBox="0 0 30 30"><circle cx="14.7" cy="14.7" r="14" fill="url(#ti)" stroke="#1ec81e" stroke-width="1"/><path d="M2.9 19 H7.3 C8.5 19 9 14.4 10 14.4 C11 14.4 11.3 18.8 12 18.8 C12.8 18.8 13.5 10.5 14.4 10.5 C15.3 10.5 16.2 18.8 17 18.8 C17.8 18.8 18.4 13.2 19.2 13.2 C20.1 13.2 20.8 18.8 22 18.8 H26.3" fill="none" stroke="#14dc14" stroke-width="1.6" stroke-linejoin="round"/><circle cx="14.4" cy="9.9" r="3.6" fill="none" stroke="#18b8c0" stroke-width="1.2"/><ellipse cx="14.4" cy="10.4" rx="1.2" ry="1.6" fill="#14dc14"/></svg><div class="a t" style="left:175.5px;top:840.9px;font-size:16.2px;line-height:16.2px;color:#1a1a1a;transform:scaleX(0.935);transform-origin:0 0">29 C26-VGV-1</div><svg class="a" style="left:114.3px;top:874.8px" width="6" height="11" viewBox="0 0 6 11"><path d="M0.2 0 L5.5 5.3 L0.2 10.6 Z" fill="#606060"/></svg><svg class="a" style="left:137.9px;top:865.4px" width="30" height="30" viewBox="0 0 30 30"><circle cx="14.7" cy="14.7" r="14" fill="url(#ti)" stroke="#1ec81e" stroke-width="1"/><path d="M2.9 19 H7.3 C8.5 19 9 14.4 10 14.4 C11 14.4 11.3 18.8 12 18.8 C12.8 18.8 13.5 10.5 14.4 10.5 C15.3 10.5 16.2 18.8 17 18.8 C17.8 18.8 18.4 13.2 19.2 13.2 C20.1 13.2 20.8 18.8 22 18.8 H26.3" fill="none" stroke="#14dc14" stroke-width="1.6" stroke-linejoin="round"/><circle cx="14.4" cy="9.9" r="3.6" fill="none" stroke="#18b8c0" stroke-width="1.2"/><ellipse cx="14.4" cy="10.4" rx="1.2" ry="1.6" fill="#14dc14"/></svg><div class="a t" style="left:175.5px;top:872.9px;font-size:16.2px;line-height:16.2px;color:#1a1a1a;transform:scaleX(0.935);transform-origin:0 0">30 A22-VGV-2</div><svg class="a" style="left:114.3px;top:906.8px" width="6" height="11" viewBox="0 0 6 11"><path d="M0.2 0 L5.5 5.3 L0.2 10.6 Z" fill="#606060"/></svg><svg class="a" style="left:137.9px;top:897.4px" width="30" height="30" viewBox="0 0 30 30"><circle cx="14.7" cy="14.7" r="14" fill="url(#ti)" stroke="#1ec81e" stroke-width="1"/><path d="M2.9 19 H7.3 C8.5 19 9 14.4 10 14.4 C11 14.4 11.3 18.8 12 18.8 C12.8 18.8 13.5 10.5 14.4 10.5 C15.3 10.5 16.2 18.8 17 18.8 C17.8 18.8 18.4 13.2 19.2 13.2 C20.1 13.2 20.8 18.8 22 18.8 H26.3" fill="none" stroke="#14dc14" stroke-width="1.6" stroke-linejoin="round"/><circle cx="14.4" cy="9.9" r="3.6" fill="none" stroke="#18b8c0" stroke-width="1.2"/><ellipse cx="14.4" cy="10.4" rx="1.2" ry="1.6" fill="#14dc14"/></svg><div class="a t" style="left:175.5px;top:904.9px;font-size:16.2px;line-height:16.2px;color:#1a1a1a;transform:scaleX(0.935);transform-origin:0 0">31 C22-VGV-2</div><svg class="a" style="left:114.3px;top:938.8px" width="6" height="11" viewBox="0 0 6 11"><path d="M0.2 0 L5.5 5.3 L0.2 10.6 Z" fill="#606060"/></svg><svg class="a" style="left:137.9px;top:929.4px" width="30" height="30" viewBox="0 0 30 30"><circle cx="14.7" cy="14.7" r="14" fill="url(#ti)" stroke="#1ec81e" stroke-width="1"/><path d="M2.9 19 H7.3 C8.5 19 9 14.4 10 14.4 C11 14.4 11.3 18.8 12 18.8 C12.8 18.8 13.5 10.5 14.4 10.5 C15.3 10.5 16.2 18.8 17 18.8 C17.8 18.8 18.4 13.2 19.2 13.2 C20.1 13.2 20.8 18.8 22 18.8 H26.3" fill="none" stroke="#14dc14" stroke-width="1.6" stroke-linejoin="round"/><circle cx="14.4" cy="9.9" r="3.6" fill="none" stroke="#18b8c0" stroke-width="1.2"/><ellipse cx="14.4" cy="10.4" rx="1.2" ry="1.6" fill="#14dc14"/></svg><div class="a t" style="left:175.5px;top:936.9px;font-size:16.2px;line-height:16.2px;color:#1a1a1a;transform:scaleX(0.935);transform-origin:0 0">32 A26-VGV-2</div><svg class="a" style="left:114.3px;top:970.8px" width="6" height="11" viewBox="0 0 6 11"><path d="M0.2 0 L5.5 5.3 L0.2 10.6 Z" fill="#606060"/></svg><svg class="a" style="left:137.9px;top:961.4px" width="30" height="30" viewBox="0 0 30 30"><circle cx="14.7" cy="14.7" r="14" fill="url(#ti)" stroke="#1ec81e" stroke-width="1"/><path d="M2.9 19 H7.3 C8.5 19 9 14.4 10 14.4 C11 14.4 11.3 18.8 12 18.8 C12.8 18.8 13.5 10.5 14.4 10.5 C15.3 10.5 16.2 18.8 17 18.8 C17.8 18.8 18.4 13.2 19.2 13.2 C20.1 13.2 20.8 18.8 22 18.8 H26.3" fill="none" stroke="#14dc14" stroke-width="1.6" stroke-linejoin="round"/><circle cx="14.4" cy="9.9" r="3.6" fill="none" stroke="#18b8c0" stroke-width="1.2"/><ellipse cx="14.4" cy="10.4" rx="1.2" ry="1.6" fill="#14dc14"/></svg><div class="a t" style="left:175.5px;top:968.9px;font-size:16.2px;line-height:16.2px;color:#1a1a1a;transform:scaleX(0.935);transform-origin:0 0">33 B26-VGV-2</div><svg class="a" style="left:114.3px;top:1002.8px" width="6" height="11" viewBox="0 0 6 11"><path d="M0.2 0 L5.5 5.3 L0.2 10.6 Z" fill="#606060"/></svg><svg class="a" style="left:137.9px;top:993.4px" width="30" height="30" viewBox="0 0 30 30"><circle cx="14.7" cy="14.7" r="14" fill="url(#ti)" stroke="#1ec81e" stroke-width="1"/><path d="M2.9 19 H7.3 C8.5 19 9 14.4 10 14.4 C11 14.4 11.3 18.8 12 18.8 C12.8 18.8 13.5 10.5 14.4 10.5 C15.3 10.5 16.2 18.8 17 18.8 C17.8 18.8 18.4 13.2 19.2 13.2 C20.1 13.2 20.8 18.8 22 18.8 H26.3" fill="none" stroke="#14dc14" stroke-width="1.6" stroke-linejoin="round"/><circle cx="14.4" cy="9.9" r="3.6" fill="none" stroke="#18b8c0" stroke-width="1.2"/><ellipse cx="14.4" cy="10.4" rx="1.2" ry="1.6" fill="#14dc14"/></svg><div class="a t" style="left:175.5px;top:1000.9px;font-size:16.2px;line-height:16.2px;color:#1a1a1a;transform:scaleX(0.935);transform-origin:0 0">34 C26-VGV-2</div><svg class="a" style="left:114.3px;top:1034.8px" width="6" height="11" viewBox="0 0 6 11"><path d="M0.2 0 L5.5 5.3 L0.2 10.6 Z" fill="#606060"/></svg><svg class="a" style="left:137.9px;top:1025.4px" width="30" height="30" viewBox="0 0 30 30"><circle cx="14.7" cy="14.7" r="14" fill="url(#ti)" stroke="#1ec81e" stroke-width="1"/><path d="M2.9 19 H7.3 C8.5 19 9 14.4 10 14.4 C11 14.4 11.3 18.8 12 18.8 C12.8 18.8 13.5 10.5 14.4 10.5 C15.3 10.5 16.2 18.8 17 18.8 C17.8 18.8 18.4 13.2 19.2 13.2 C20.1 13.2 20.8 18.8 22 18.8 H26.3" fill="none" stroke="#14dc14" stroke-width="1.6" stroke-linejoin="round"/><circle cx="14.4" cy="9.9" r="3.6" fill="none" stroke="#18b8c0" stroke-width="1.2"/><ellipse cx="14.4" cy="10.4" rx="1.2" ry="1.6" fill="#14dc14"/></svg><div class="a t" style="left:175.5px;top:1032.9px;font-size:16.2px;line-height:16.2px;color:#1a1a1a;transform:scaleX(0.935);transform-origin:0 0">35 A20-VGV-3</div><svg class="a" style="left:114.3px;top:1066.8px" width="6" height="11" viewBox="0 0 6 11"><path d="M0.2 0 L5.5 5.3 L0.2 10.6 Z" fill="#606060"/></svg><svg class="a" style="left:137.9px;top:1057.4px" width="30" height="30" viewBox="0 0 30 30"><circle cx="14.7" cy="14.7" r="14" fill="url(#ti)" stroke="#1ec81e" stroke-width="1"/><path d="M2.9 19 H7.3 C8.5 19 9 14.4 10 14.4 C11 14.4 11.3 18.8 12 18.8 C12.8 18.8 13.5 10.5 14.4 10.5 C15.3 10.5 16.2 18.8 17 18.8 C17.8 18.8 18.4 13.2 19.2 13.2 C20.1 13.2 20.8 18.8 22 18.8 H26.3" fill="none" stroke="#14dc14" stroke-width="1.6" stroke-linejoin="round"/><circle cx="14.4" cy="9.9" r="3.6" fill="none" stroke="#18b8c0" stroke-width="1.2"/><ellipse cx="14.4" cy="10.4" rx="1.2" ry="1.6" fill="#14dc14"/></svg><div class="a t" style="left:175.5px;top:1064.9px;font-size:16.2px;line-height:16.2px;color:#1a1a1a;transform:scaleX(0.935);transform-origin:0 0">36 B20-VGV-3</div></div><div class="a" style="left:437px;top:221px;width:2123px;height:1130px;background:#fff"></div><svg class="a t" style="left:0;top:0" width="2560" height="1392" viewBox="0 0 2560 1392"><rect x="444.5" y="230" width="1053.5" height="1113.4" fill="none" stroke="#f38a8a" stroke-width="3" stroke-dasharray="10.5 2.7 5.3 2.7"/><rect x="449.6" y="235.2" width="1045" height="1104" rx="3" fill="none" stroke="#8e8e8e" stroke-width="1.6"/><rect x="1500.5" y="229.9" width="1051.2" height="1113.9" fill="none" stroke="#e2e2e2" stroke-width="1.2"/><rect x="1503.1" y="235" width="1044.6" height="1104" rx="3" fill="none" stroke="#8e8e8e" stroke-width="1.6"/><g fill="none" stroke="#808080" stroke-width="2.2"><path d="M455 244 V238.8 H460" /><path d="M462.5 238.8 H466 M468.5 238.8 H472 M474 238.8 H479.5 V243.5"/><path d="M455 246.5 V251.5 M455 254.5 V259.5 H459.5"/><rect x="463" y="252.2" width="24.5" height="19"/><path d="M479.5 246 V252"/></g><path d="M472.5 257 L472.5 267 L475 264.5 L477 268 L478.5 267.2 L476.6 263.8 L480 263.8 Z" fill="#808080"/><line x1="523.60" y1="1084.95" x2="1485.30" y2="1084.95" stroke="#e8e8e8" stroke-width="1.1"/><line x1="523.60" y1="897.95" x2="1485.30" y2="897.95" stroke="#e8e8e8" stroke-width="1.1"/><line x1="523.60" y1="710.95" x2="1485.30" y2="710.95" stroke="#e8e8e8" stroke-width="1.1"/><line x1="523.60" y1="523.95" x2="1485.30" y2="523.95" stroke="#e8e8e8" stroke-width="1.1"/><line x1="523.60" y1="336.95" x2="1485.30" y2="336.95" stroke="#e8e8e8" stroke-width="1.1"/><line x1="536.20" y1="276.70" x2="536.20" y2="1270.50" stroke="#e8e8e8" stroke-width="1.1"/><line x1="808.45" y1="276.70" x2="808.45" y2="1270.50" stroke="#e8e8e8" stroke-width="1.1"/><line x1="1080.70" y1="276.70" x2="1080.70" y2="1270.50" stroke="#e8e8e8" stroke-width="1.1"/><line x1="1352.95" y1="276.70" x2="1352.95" y2="1270.50" stroke="#e8e8e8" stroke-width="1.1"/><rect x="522.6" y="275.7" width="963.6999999999999" height="995.8" rx="5" fill="none" stroke="#8a8a8a" stroke-width="2"/><line x1="518.40" y1="282.00" x2="518.40" y2="1263.70" stroke="#6a6a6a" stroke-width="1.4"/><line x1="513.40" y1="1225.20" x2="518.40" y2="1225.20" stroke="#777" stroke-width="1.3"/><line x1="513.40" y1="1178.45" x2="518.40" y2="1178.45" stroke="#777" stroke-width="1.3"/><line x1="513.40" y1="1131.70" x2="518.40" y2="1131.70" stroke="#777" stroke-width="1.3"/><line x1="513.40" y1="1038.20" x2="518.40" y2="1038.20" stroke="#777" stroke-width="1.3"/><line x1="513.40" y1="991.45" x2="518.40" y2="991.45" stroke="#777" stroke-width="1.3"/><line x1="513.40" y1="944.70" x2="518.40" y2="944.70" stroke="#777" stroke-width="1.3"/><line x1="513.40" y1="851.20" x2="518.40" y2="851.20" stroke="#777" stroke-width="1.3"/><line x1="513.40" y1="804.45" x2="518.40" y2="804.45" stroke="#777" stroke-width="1.3"/><line x1="513.40" y1="757.70" x2="518.40" y2="757.70" stroke="#777" stroke-width="1.3"/><line x1="513.40" y1="664.20" x2="518.40" y2="664.20" stroke="#777" stroke-width="1.3"/><line x1="513.40" y1="617.45" x2="518.40" y2="617.45" stroke="#777" stroke-width="1.3"/><line x1="513.40" y1="570.70" x2="518.40" y2="570.70" stroke="#777" stroke-width="1.3"/><line x1="513.40" y1="477.20" x2="518.40" y2="477.20" stroke="#777" stroke-width="1.3"/><line x1="513.40" y1="430.45" x2="518.40" y2="430.45" stroke="#777" stroke-width="1.3"/><line x1="513.40" y1="383.70" x2="518.40" y2="383.70" stroke="#777" stroke-width="1.3"/><line x1="513.40" y1="290.20" x2="518.40" y2="290.20" stroke="#777" stroke-width="1.3"/><line x1="507.40" y1="1084.95" x2="518.40" y2="1084.95" stroke="#8a8a8a" stroke-width="1.4"/><line x1="507.40" y1="897.95" x2="518.40" y2="897.95" stroke="#8a8a8a" stroke-width="1.4"/><line x1="507.40" y1="710.95" x2="518.40" y2="710.95" stroke="#8a8a8a" stroke-width="1.4"/><line x1="507.40" y1="523.95" x2="518.40" y2="523.95" stroke="#8a8a8a" stroke-width="1.4"/><line x1="507.40" y1="336.95" x2="518.40" y2="336.95" stroke="#8a8a8a" stroke-width="1.4"/><text x="500.70" y="1091.45" font-size="16" text-anchor="end" font-weight="normal" fill="#111" >2</text><text x="500.70" y="904.45" font-size="16" text-anchor="end" font-weight="normal" fill="#111" >4</text><text x="500.70" y="717.45" font-size="16" text-anchor="end" font-weight="normal" fill="#111" >6</text><text x="500.70" y="530.45" font-size="16" text-anchor="end" font-weight="normal" fill="#111" >8</text><text x="500.70" y="343.45" font-size="16" text-anchor="end" font-weight="normal" fill="#111" >10</text><line x1="529.00" y1="1275.50" x2="1478.80" y2="1275.50" stroke="#6a6a6a" stroke-width="1.4"/><line x1="590.65" y1="1275.50" x2="590.65" y2="1280.50" stroke="#777" stroke-width="1.3"/><line x1="645.10" y1="1275.50" x2="645.10" y2="1280.50" stroke="#777" stroke-width="1.3"/><line x1="699.55" y1="1275.50" x2="699.55" y2="1280.50" stroke="#777" stroke-width="1.3"/><line x1="754.00" y1="1275.50" x2="754.00" y2="1280.50" stroke="#777" stroke-width="1.3"/><line x1="862.90" y1="1275.50" x2="862.90" y2="1280.50" stroke="#777" stroke-width="1.3"/><line x1="917.35" y1="1275.50" x2="917.35" y2="1280.50" stroke="#777" stroke-width="1.3"/><line x1="971.80" y1="1275.50" x2="971.80" y2="1280.50" stroke="#777" stroke-width="1.3"/><line x1="1026.25" y1="1275.50" x2="1026.25" y2="1280.50" stroke="#777" stroke-width="1.3"/><line x1="1135.15" y1="1275.50" x2="1135.15" y2="1280.50" stroke="#777" stroke-width="1.3"/><line x1="1189.60" y1="1275.50" x2="1189.60" y2="1280.50" stroke="#777" stroke-width="1.3"/><line x1="1244.05" y1="1275.50" x2="1244.05" y2="1280.50" stroke="#777" stroke-width="1.3"/><line x1="1298.50" y1="1275.50" x2="1298.50" y2="1280.50" stroke="#777" stroke-width="1.3"/><line x1="1407.40" y1="1275.50" x2="1407.40" y2="1280.50" stroke="#777" stroke-width="1.3"/><line x1="1461.85" y1="1275.50" x2="1461.85" y2="1280.50" stroke="#777" stroke-width="1.3"/><line x1="536.20" y1="1275.50" x2="536.20" y2="1285.50" stroke="#8a8a8a" stroke-width="1.4"/><line x1="808.45" y1="1275.50" x2="808.45" y2="1285.50" stroke="#8a8a8a" stroke-width="1.4"/><line x1="1080.70" y1="1275.50" x2="1080.70" y2="1285.50" stroke="#8a8a8a" stroke-width="1.4"/><line x1="1352.95" y1="1275.50" x2="1352.95" y2="1285.50" stroke="#8a8a8a" stroke-width="1.4"/><text x="536.20" y="1306.00" font-size="16" text-anchor="middle" font-weight="normal" fill="#111" >8,500</text><text x="808.45" y="1306.00" font-size="16" text-anchor="middle" font-weight="normal" fill="#111" >9,000</text><text x="1080.70" y="1306.00" font-size="16" text-anchor="middle" font-weight="normal" fill="#111" >9,500</text><text x="1352.95" y="1306.00" font-size="16" text-anchor="middle" font-weight="normal" fill="#111" >10,000</text><text x="1004.50" y="265.00" font-size="22" text-anchor="middle" font-weight="bold" fill="#000" >Envelope</text><text x="1004.50" y="1328.40" font-size="18.5" text-anchor="middle" font-weight="bold" fill="#000" letter-spacing="0.6">Hertz</text><text x="0" y="0" font-size="18.5" font-weight="bold" text-anchor="middle" fill="#000" transform="translate(474.5,772) rotate(-90)">ksi</text><clipPath id="cp522"><rect x="522.6" y="275.7" width="963.6999999999999" height="995.8"/></clipPath><g clip-path="url(#cp522)" fill="none" stroke-width="1.5" stroke-linejoin="round"><path d="M523.2,1233.9 L527.9,1230.4 L531.1,1230.4 L539.8,1225.2 L547.7,1233.9 L559.5,1227.5 L565.8,1230.4 L573.7,1238.6 L583.2,1240.2 L585.6,1239.4 L591.9,1242.6 L600.6,1237.0 L608.5,1232.3 L614.8,1226.7 L618.0,1227.2 L625.9,1222.8 L630.6,1218.8 L636.2,1212.5 L644.9,1191.2 L652.8,1165.9 L661.5,1123.2 L670.2,1095.6 L679.6,1128.0 L682.8,1131.1 L689.1,1135.9 L697.8,1169.8 L706.5,1178.5 L709.7,1177.7 L715.2,1186.4 L719.1,1191.2 L732.6,1203.8 L742.9,1204.1 L750.8,1205.4 L760.2,1196.7 L767.4,1194.0 L776.8,1199.9 L777.1,1199.9 L787.4,1190.4 L795.3,1197.2 L804.8,1189.9 L821.4,1210.2 L828.5,1210.5 L833.2,1208.6 L839.5,1209.4 L848.2,1193.6 L856.9,1195.5 L864.8,1176.2 L874.3,1161.9 L883.8,1142.2 L892.5,1127.2 L905.9,1085.3 L910.7,1071.1 L918.8,1033.5 L927.4,980.3 L933.2,897.0 L937.5,813.7 L940.3,710.0 L947.2,417.5 L955.2,281.2 L962.0,417.5 L970.8,680.6 L974.8,785.0 L980.6,897.0 L989.2,1027.7 L997.8,1070.0 L1007.1,1100.3 L1016.6,1115.3 L1025.3,1118.5 L1031.1,1140.0 L1035.1,1154.1 L1042.6,1173.7 L1051.7,1188.3 L1054.7,1186.8 L1060.7,1192.3 L1064.3,1191.1 L1069.3,1197.3 L1078.3,1202.9 L1080.4,1201.9 L1086.9,1203.9 L1095.9,1213.9 L1104.5,1221.5 L1113.5,1226.3 L1120.1,1220.5 L1131.6,1231.5 L1140.7,1226.0 L1149.2,1236.6 L1156.8,1237.4 L1164.8,1234.3 L1175.4,1240.1 L1183.4,1230.5 L1193.0,1229.0 L1199.5,1224.5 L1211.1,1229.5 L1216.6,1225.0 L1220.2,1227.0 L1228.7,1218.0 L1237.3,1215.9 L1244.3,1206.9 L1254.4,1218.5 L1255.0,1218.0 L1264.1,1233.5 L1273.6,1239.6 L1280.7,1240.6 L1290.7,1244.1 L1298.3,1241.6 L1304.3,1241.8 L1308.3,1242.4 L1316.9,1226.0 L1324.9,1218.5 L1335.0,1219.0 L1344.0,1213.9 L1351.1,1205.9 L1361.6,1219.5 L1370.2,1218.5 L1379.2,1224.5 L1387.8,1228.0 L1396.9,1239.6 L1405.4,1247.6 L1415.0,1245.4 L1424.0,1247.1 L1434.1,1245.1 L1441.1,1248.1 L1450.7,1240.1 L1453.7,1240.1 L1467.3,1245.1 L1484.4,1234.5 L1485.9,1235.1" stroke="#ff4422"/><path d="M523.2,1250.5 L529.5,1246.8 L539.8,1246.8 L547.7,1252.0 L553.2,1250.9 L560.3,1248.9 L573.7,1253.1 L584.8,1252.5 L588.0,1251.6 L600.6,1254.1 L608.5,1251.6 L614.8,1248.9 L618.0,1248.6 L625.9,1242.6 L636.2,1236.7 L644.9,1222.8 L653.6,1206.2 L662.2,1181.7 L670.9,1169.1 L679.6,1185.7 L689.1,1190.4 L697.8,1208.6 L707.3,1218.1 L710.5,1215.7 L723.9,1226.7 L732.6,1231.5 L742.1,1239.4 L751.5,1235.1 L760.2,1236.7 L768.1,1231.5 L777.1,1239.4 L777.6,1239.4 L787.4,1233.1 L795.3,1237.0 L804.8,1232.3 L822.2,1239.4 L830.1,1241.4 L838.8,1241.4 L848.2,1234.6 L856.9,1235.4 L864.8,1225.2 L875.1,1215.7 L883.8,1205.4 L894.1,1197.5 L901.2,1188.0 L910.7,1169.1 L919.4,1148.5 L928.1,1119.3 L937.3,1046.0 L940.2,960.0 L944.5,845.0 L947.4,816.0 L955.2,740.6 L963.2,816.0 L967.5,891.0 L971.8,960.0 L980.4,1083.4 L987.6,1130.0 L999.2,1169.1 L1007.9,1180.9 L1016.6,1187.2 L1020.0,1189.1 L1026.0,1191.3 L1033.1,1205.4 L1041.6,1217.4 L1051.7,1226.5 L1058.2,1227.3 L1063.3,1226.0 L1069.3,1231.0 L1078.3,1235.6 L1084.9,1233.7 L1094.9,1242.1 L1106.0,1247.1 L1113.5,1249.1 L1119.6,1246.4 L1131.6,1251.6 L1141.7,1248.6 L1149.8,1253.2 L1158.8,1250.1 L1161.8,1250.6 L1167.9,1250.6 L1175.4,1248.1 L1183.4,1241.4 L1193.5,1241.4 L1200.0,1236.1 L1211.1,1238.1 L1216.1,1235.1 L1220.7,1237.1 L1228.7,1231.5 L1236.8,1226.5 L1243.3,1225.0 L1248.8,1225.3 L1255.0,1232.5 L1255.4,1232.5 L1264.1,1248.1 L1273.6,1253.2 L1281.2,1253.7 L1290.7,1251.6 L1298.3,1245.6 L1309.3,1238.1 L1316.9,1233.5 L1325.9,1221.0 L1335.5,1228.5 L1344.0,1225.0 L1349.6,1219.0 L1361.6,1229.5 L1370.7,1235.1 L1379.2,1241.1 L1387.8,1242.1 L1396.9,1249.1 L1405.4,1256.2 L1415.5,1257.2 L1424.0,1256.7 L1440.1,1257.5 L1452.7,1254.7 L1465.2,1257.2 L1475.3,1257.7 L1485.9,1254.2" stroke="#2c6cbe"/></g><line x1="1126.00" y1="302.00" x2="1150.00" y2="302.00" stroke="#5b8fd1" stroke-width="2.2"/><line x1="1300.90" y1="302.00" x2="1324.60" y2="302.00" stroke="#f5693f" stroke-width="2.2"/><text x="1155.30" y="307.30" font-size="11.6" text-anchor="start" font-weight="normal" fill="#111" >A22-VGV-1 ksi P2P Viewer</text><text x="1330.00" y="307.30" font-size="11.6" text-anchor="start" font-weight="normal" fill="#111" >C22-VGV-1 ksi P2P Viewer</text><line x1="1581.50" y1="1116.30" x2="2539.00" y2="1116.30" stroke="#e8e8e8" stroke-width="1.1"/><line x1="1581.50" y1="947.40" x2="2539.00" y2="947.40" stroke="#e8e8e8" stroke-width="1.1"/><line x1="1581.50" y1="778.50" x2="2539.00" y2="778.50" stroke="#e8e8e8" stroke-width="1.1"/><line x1="1581.50" y1="609.60" x2="2539.00" y2="609.60" stroke="#e8e8e8" stroke-width="1.1"/><line x1="1581.50" y1="440.70" x2="2539.00" y2="440.70" stroke="#e8e8e8" stroke-width="1.1"/><line x1="1593.25" y1="277.00" x2="1593.25" y2="1270.60" stroke="#e8e8e8" stroke-width="1.1"/><line x1="1864.50" y1="277.00" x2="1864.50" y2="1270.60" stroke="#e8e8e8" stroke-width="1.1"/><line x1="2135.75" y1="277.00" x2="2135.75" y2="1270.60" stroke="#e8e8e8" stroke-width="1.1"/><line x1="2407.00" y1="277.00" x2="2407.00" y2="1270.60" stroke="#e8e8e8" stroke-width="1.1"/><rect x="1580.5" y="276" width="959.5" height="995.5999999999999" rx="5" fill="none" stroke="#8a8a8a" stroke-width="2"/><line x1="1575.30" y1="282.00" x2="1575.30" y2="1264.20" stroke="#6a6a6a" stroke-width="1.4"/><line x1="1570.30" y1="1251.42" x2="1575.30" y2="1251.42" stroke="#777" stroke-width="1.3"/><line x1="1570.30" y1="1217.64" x2="1575.30" y2="1217.64" stroke="#777" stroke-width="1.3"/><line x1="1570.30" y1="1183.86" x2="1575.30" y2="1183.86" stroke="#777" stroke-width="1.3"/><line x1="1570.30" y1="1150.08" x2="1575.30" y2="1150.08" stroke="#777" stroke-width="1.3"/><line x1="1570.30" y1="1082.52" x2="1575.30" y2="1082.52" stroke="#777" stroke-width="1.3"/><line x1="1570.30" y1="1048.74" x2="1575.30" y2="1048.74" stroke="#777" stroke-width="1.3"/><line x1="1570.30" y1="1014.96" x2="1575.30" y2="1014.96" stroke="#777" stroke-width="1.3"/><line x1="1570.30" y1="981.18" x2="1575.30" y2="981.18" stroke="#777" stroke-width="1.3"/><line x1="1570.30" y1="913.62" x2="1575.30" y2="913.62" stroke="#777" stroke-width="1.3"/><line x1="1570.30" y1="879.84" x2="1575.30" y2="879.84" stroke="#777" stroke-width="1.3"/><line x1="1570.30" y1="846.06" x2="1575.30" y2="846.06" stroke="#777" stroke-width="1.3"/><line x1="1570.30" y1="812.28" x2="1575.30" y2="812.28" stroke="#777" stroke-width="1.3"/><line x1="1570.30" y1="744.72" x2="1575.30" y2="744.72" stroke="#777" stroke-width="1.3"/><line x1="1570.30" y1="710.94" x2="1575.30" y2="710.94" stroke="#777" stroke-width="1.3"/><line x1="1570.30" y1="677.16" x2="1575.30" y2="677.16" stroke="#777" stroke-width="1.3"/><line x1="1570.30" y1="643.38" x2="1575.30" y2="643.38" stroke="#777" stroke-width="1.3"/><line x1="1570.30" y1="575.82" x2="1575.30" y2="575.82" stroke="#777" stroke-width="1.3"/><line x1="1570.30" y1="542.04" x2="1575.30" y2="542.04" stroke="#777" stroke-width="1.3"/><line x1="1570.30" y1="508.26" x2="1575.30" y2="508.26" stroke="#777" stroke-width="1.3"/><line x1="1570.30" y1="474.48" x2="1575.30" y2="474.48" stroke="#777" stroke-width="1.3"/><line x1="1570.30" y1="406.92" x2="1575.30" y2="406.92" stroke="#777" stroke-width="1.3"/><line x1="1570.30" y1="373.14" x2="1575.30" y2="373.14" stroke="#777" stroke-width="1.3"/><line x1="1570.30" y1="339.36" x2="1575.30" y2="339.36" stroke="#777" stroke-width="1.3"/><line x1="1570.30" y1="305.58" x2="1575.30" y2="305.58" stroke="#777" stroke-width="1.3"/><line x1="1564.30" y1="1116.30" x2="1575.30" y2="1116.30" stroke="#8a8a8a" stroke-width="1.4"/><line x1="1564.30" y1="947.40" x2="1575.30" y2="947.40" stroke="#8a8a8a" stroke-width="1.4"/><line x1="1564.30" y1="778.50" x2="1575.30" y2="778.50" stroke="#8a8a8a" stroke-width="1.4"/><line x1="1564.30" y1="609.60" x2="1575.30" y2="609.60" stroke="#8a8a8a" stroke-width="1.4"/><line x1="1564.30" y1="440.70" x2="1575.30" y2="440.70" stroke="#8a8a8a" stroke-width="1.4"/><text x="1557.60" y="1122.80" font-size="16" text-anchor="end" font-weight="normal" fill="#111" >0.5</text><text x="1557.60" y="953.90" font-size="16" text-anchor="end" font-weight="normal" fill="#111" >1</text><text x="1557.60" y="785.00" font-size="16" text-anchor="end" font-weight="normal" fill="#111" >1.5</text><text x="1557.60" y="616.10" font-size="16" text-anchor="end" font-weight="normal" fill="#111" >2</text><text x="1557.60" y="447.20" font-size="16" text-anchor="end" font-weight="normal" fill="#111" >2.5</text><line x1="1586.30" y1="1275.90" x2="2532.00" y2="1275.90" stroke="#6a6a6a" stroke-width="1.4"/><line x1="1647.50" y1="1275.90" x2="1647.50" y2="1280.90" stroke="#777" stroke-width="1.3"/><line x1="1701.75" y1="1275.90" x2="1701.75" y2="1280.90" stroke="#777" stroke-width="1.3"/><line x1="1756.00" y1="1275.90" x2="1756.00" y2="1280.90" stroke="#777" stroke-width="1.3"/><line x1="1810.25" y1="1275.90" x2="1810.25" y2="1280.90" stroke="#777" stroke-width="1.3"/><line x1="1918.75" y1="1275.90" x2="1918.75" y2="1280.90" stroke="#777" stroke-width="1.3"/><line x1="1973.00" y1="1275.90" x2="1973.00" y2="1280.90" stroke="#777" stroke-width="1.3"/><line x1="2027.25" y1="1275.90" x2="2027.25" y2="1280.90" stroke="#777" stroke-width="1.3"/><line x1="2081.50" y1="1275.90" x2="2081.50" y2="1280.90" stroke="#777" stroke-width="1.3"/><line x1="2190.00" y1="1275.90" x2="2190.00" y2="1280.90" stroke="#777" stroke-width="1.3"/><line x1="2244.25" y1="1275.90" x2="2244.25" y2="1280.90" stroke="#777" stroke-width="1.3"/><line x1="2298.50" y1="1275.90" x2="2298.50" y2="1280.90" stroke="#777" stroke-width="1.3"/><line x1="2352.75" y1="1275.90" x2="2352.75" y2="1280.90" stroke="#777" stroke-width="1.3"/><line x1="2461.25" y1="1275.90" x2="2461.25" y2="1280.90" stroke="#777" stroke-width="1.3"/><line x1="2515.50" y1="1275.90" x2="2515.50" y2="1280.90" stroke="#777" stroke-width="1.3"/><line x1="1593.25" y1="1275.90" x2="1593.25" y2="1285.90" stroke="#8a8a8a" stroke-width="1.4"/><line x1="1864.50" y1="1275.90" x2="1864.50" y2="1285.90" stroke="#8a8a8a" stroke-width="1.4"/><line x1="2135.75" y1="1275.90" x2="2135.75" y2="1285.90" stroke="#8a8a8a" stroke-width="1.4"/><line x1="2407.00" y1="1275.90" x2="2407.00" y2="1285.90" stroke="#8a8a8a" stroke-width="1.4"/><text x="1593.25" y="1306.00" font-size="16" text-anchor="middle" font-weight="normal" fill="#111" >8,500</text><text x="1864.50" y="1306.00" font-size="16" text-anchor="middle" font-weight="normal" fill="#111" >9,000</text><text x="2135.75" y="1306.00" font-size="16" text-anchor="middle" font-weight="normal" fill="#111" >9,500</text><text x="2407.00" y="1306.00" font-size="16" text-anchor="middle" font-weight="normal" fill="#111" >10,000</text><text x="2060.00" y="265.00" font-size="22" text-anchor="middle" font-weight="bold" fill="#000" >Envelope</text><text x="2060.00" y="1328.40" font-size="18.5" text-anchor="middle" font-weight="bold" fill="#000" letter-spacing="0.6">Hertz</text><text x="0" y="0" font-size="18.5" font-weight="bold" text-anchor="middle" fill="#000" transform="translate(1527.5,772) rotate(-90)">ksi</text><clipPath id="cp1580"><rect x="1580.5" y="276" width="959.5" height="995.5999999999999"/></clipPath><g clip-path="url(#cp1580)" fill="none" stroke-width="1.5" stroke-linejoin="round"><path d="M1580.2,1164.5 L1586.9,1146.7 L1594.0,1143.2 L1604.6,1154.3 L1617.7,1123.0 L1622.4,1131.3 L1629.5,1114.7 L1639.0,1097.0 L1648.5,1044.8 L1655.6,1006.9 L1665.1,982.0 L1667.4,984.4 L1674.5,1033.0 L1684.0,1092.2 L1689.2,1079.9 L1701.8,1118.3 L1707.7,1106.9 L1711.3,1112.4 L1719.6,1111.6 L1727.9,1131.3 L1736.2,1135.6 L1746.8,1129.7 L1755.1,1135.4 L1763.4,1134.4 L1771.7,1147.9 L1780.0,1138.0 L1790.7,1134.9 L1800.2,1123.7 L1807.3,1146.3 L1815.6,1152.7 L1825.1,1174.0 L1834.7,1197.7 L1843.0,1209.5 L1851.3,1204.1 L1860.8,1220.2 L1869.1,1224.9 L1876.2,1216.7 L1886.9,1228.5 L1895.2,1222.1 L1904.7,1210.7 L1913.0,1206.0 L1921.3,1194.1 L1929.5,1171.6 L1940.2,1149.1 L1947.3,1127.3 L1949.7,1127.8 L1958.0,1143.2 L1974.6,1172.8 L1981.7,1170.0 L1992.4,1200.1 L2000.7,1219.0 L2010.1,1227.8 L2018.4,1229.0 L2027.9,1204.8 L2036.2,1215.9 L2045.7,1189.4 L2054.0,1202.4 L2062.3,1213.1 L2071.8,1228.5 L2080.1,1232.1 L2089.7,1238.0 L2101.6,1234.4 L2114.6,1249.1 L2124.1,1252.9 L2133.6,1249.1 L2143.1,1247.0 L2151.4,1247.0 L2159.7,1236.8 L2169.1,1234.4 L2177.4,1219.0 L2195.2,1177.5 L2205.9,1120.7 L2216.5,1049.5 L2224.8,1015.2 L2232.0,1049.5 L2240.3,1097.0 L2248.5,1171.6 L2256.8,1198.9 L2266.3,1123.0 L2274.6,1002.1 L2280.0,960.0 L2283.4,938.2 L2292.0,940.3 L2295.8,960.0 L2300.7,995.0 L2310.2,1033.0 L2318.5,1078.0 L2326.8,1113.5 L2330.0,1118.6 L2345.1,1151.8 L2347.1,1151.8 L2354.1,1168.9 L2363.2,1181.0 L2371.2,1196.1 L2374.2,1193.0 L2380.3,1204.1 L2388.3,1206.1 L2393.9,1202.1 L2398.4,1205.1 L2406.4,1207.1 L2415.5,1219.2 L2426.5,1216.8 L2441.6,1237.3 L2452.7,1225.2 L2460.7,1228.2 L2471.8,1221.2 L2476.8,1224.8 L2486.8,1215.2 L2494.9,1219.2 L2498.9,1216.2 L2503.9,1218.2 L2508.0,1212.7 L2512.0,1216.2 L2521.0,1217.2 L2530.1,1205.1 L2539.1,1215.2" stroke="#ff4422"/><path d="M1580.2,1217.8 L1586.9,1207.2 L1596.3,1210.7 L1604.6,1224.9 L1616.5,1211.4 L1622.4,1214.3 L1630.7,1210.7 L1639.0,1200.1 L1648.5,1192.9 L1656.8,1182.3 L1665.1,1169.2 L1674.5,1179.9 L1685.2,1198.9 L1693.5,1217.8 L1701.8,1226.1 L1708.9,1222.1 L1719.6,1219.5 L1723.1,1217.4 L1727.9,1222.1 L1737.4,1207.2 L1743.3,1206.0 L1745.7,1207.9 L1755.1,1198.4 L1762.2,1180.6 L1771.7,1180.6 L1781.2,1171.6 L1789.5,1162.1 L1799.0,1157.4 L1806.1,1151.5 L1815.6,1158.6 L1826.2,1149.6 L1834.7,1148.6 L1843.0,1136.1 L1850.1,1132.0 L1859.6,1127.8 L1869.1,1109.5 L1877.4,1120.7 L1886.9,1095.8 L1894.0,1084.6 L1904.7,1065.0 L1911.8,1009.3 L1913.8,999.7 L1918.6,959.8 L1922.4,930.2 L1928.7,829.7 L1931.6,778.0 L1935.9,686.0 L1938.4,610.0 L1939.4,578.1 L1941.6,542.2 L1943.7,509.1 L1945.9,477.5 L1948.0,448.7 L1949.5,444.4 L1954.9,435.1 L1958.1,456.0 L1961.7,494.7 L1964.6,520.6 L1967.4,556.6 L1970.3,599.7 L1976.1,686.0 L1983.3,778.0 L1991.9,881.4 L2001.9,938.8 L2010.0,999.7 L2018.4,1043.6 L2027.9,1054.3 L2036.2,1093.4 L2044.5,1102.9 L2052.8,1106.4 L2062.3,1126.6 L2071.8,1134.9 L2080.1,1121.8 L2087.4,1118.3 L2098.0,1131.3 L2100.4,1127.3 L2106.3,1129.0 L2115.8,1143.2 L2124.1,1138.4 L2133.6,1148.6 L2141.9,1151.0 L2151.4,1133.7 L2169.1,1146.3 L2172.7,1145.5 L2177.4,1152.7 L2191.7,1140.3 L2195.2,1145.5 L2204.7,1142.5 L2213.0,1066.1 L2221.3,1003.3 L2225.3,989.1 L2230.8,1014.0 L2239.1,1082.7 L2248.1,1113.1 L2256.8,1068.5 L2266.8,960.0 L2269.4,900.8 L2273.9,830.0 L2277.7,799.8 L2284.5,765.8 L2292.0,798.3 L2297.3,855.6 L2301.1,897.8 L2311.6,960.0 L2318.5,1037.7 L2326.8,1068.5 L2330.0,1082.4 L2340.1,1120.7 L2347.1,1150.8 L2353.1,1177.0 L2363.2,1196.1 L2371.2,1227.2 L2380.3,1245.3 L2388.3,1241.3 L2397.4,1244.3 L2410.4,1238.3 L2416.5,1242.3 L2424.5,1243.3 L2443.6,1219.2 L2450.7,1222.2 L2455.7,1221.6 L2468.7,1231.2 L2477.8,1218.2 L2490.9,1211.1 L2502.9,1227.2 L2512.0,1230.2 L2518.0,1227.2 L2531.1,1239.3 L2539.1,1245.3" stroke="#2c6cbe"/></g><line x1="2179.20" y1="302.00" x2="2203.10" y2="302.00" stroke="#5b8fd1" stroke-width="2.2"/><line x1="2354.00" y1="302.00" x2="2378.00" y2="302.00" stroke="#f5693f" stroke-width="2.2"/><text x="2208.70" y="307.30" font-size="11.6" text-anchor="start" font-weight="normal" fill="#111" >A24-VGV-1 ksi P2P Viewer</text><text x="2383.60" y="307.30" font-size="11.6" text-anchor="start" font-weight="normal" fill="#111" >B24-VGV-1 ksi P2P Viewer</text></svg><div class="a" style="left:0px;top:1351px;width:2560px;height:41px;background:#efefef"></div><svg class="a" style="left:13px;top:1360px;" width="18" height="23" viewBox="0 0 18 23"><path d="M1 1 H11 L16.5 6.5 V21.5 H1 Z" fill="#fff" stroke="#c7cfd8" stroke-width="0.9"/><path d="M11 1 V6.5 H16.5" fill="none" stroke="#c7cfd8" stroke-width="0.9"/><path d="M4 11 H6 M8 11 H10 M12 11 H14 M4 15 H6 M8 15 H10 M12 15 H14" stroke="#b5bcc4" stroke-width="1.4"/></svg><div class="a t" style="left:35.5px;top:1365.2px;line-height:15.5px;font-size:15.5px;color:#1a1a1a;font-weight:normal;">OmerDataAnalysis.dxd</div><svg class="a" style="left:225px;top:1360px;" width="23" height="23" viewBox="0 0 23 23"><circle cx="11.5" cy="11.5" r="10.6" fill="#111" stroke="#c83030" stroke-width="1"/><path d="M3 13 H8 L10 8 L12 14 L14 9 L16 13 H20" fill="none" stroke="#22d022" stroke-width="1.2"/><path d="M11 5 V11" stroke="#e03030" stroke-width="1"/></svg><div class="a" style="left:275px;top:1360px;width:1px;height:25px;background:#d8d8d8"></div><svg class="a" style="left:1950px;top:1358px;" width="27" height="27" viewBox="0 0 27 27"><circle cx="13.5" cy="13.5" r="13.2" fill="#f7d694"/><circle cx="13.5" cy="13.5" r="9" fill="#fbe7b8"/><text x="13.5" y="15.5" font-size="5" text-anchor="middle" fill="#b08a40" font-family="Liberation Sans">APEX</text></svg><div class="a t" style="left:1987.7px;top:1365.6px;line-height:15.5px;font-size:15.5px;color:#1a1a1a;font-weight:normal;">25/267/300</div><svg class="a" style="left:2080px;top:1359px;" width="29" height="25" viewBox="0 0 29 25"><rect x="1" y="1" width="27" height="17" fill="#c6e5fa" stroke="#5a6a7a" stroke-width="1.6"/><path d="M14.5 18 V22 M8 23.5 H21" stroke="#5a6a7a" stroke-width="2"/><path d="M9 5 L13.5 4.3 V8.5 H9 Z M14.5 4.2 L20 3.5 V8.5 H14.5 Z M9 9.5 H13.5 V13.7 L9 13 Z M14.5 9.5 H20 V14.5 L14.5 13.8 Z" fill="#2a3a4a"/></svg><div class="a t" style="left:2118.6px;top:1365.6px;line-height:15.5px;font-size:15.5px;color:#1a1a1a;font-weight:normal;">ApexOpsD5071TRS</div><div class="a" style="left:2264.8px;top:1358px;width:26.5px;height:26.3px;background:#7aaae6"></div><div class="a t" style="left:1878.0px;width:800px;text-align:center;top:1365.1px;line-height:14px;font-size:14px;color:#f4f8ff;font-weight:normal;">x64</div><div class="a t" style="left:2302.2px;top:1365.6px;line-height:15.5px;font-size:15.5px;color:#1a1a1a;font-weight:normal;">DX 2025.50.3-1</div><svg class="a" style="left:2420px;top:1357px;" width="29" height="28" viewBox="0 0 29 28"><path d="M8 12 V7 A6.5 6.5 0 0 1 21 7 V12" fill="none" stroke="#7b8794" stroke-width="1.6"/><rect x="1" y="11.5" width="27" height="16" rx="1.5" fill="#f6d088"/><path d="M1 15 H28 M1 18.5 H28 M1 22 H28 M1 25.5 H28" stroke="#fbe6b8" stroke-width="1.2"/></svg><div class="a t" style="left:2458.1px;top:1365.6px;line-height:15.5px;font-size:15.5px;color:#1a1a1a;font-weight:normal;">Apex-Turbine</div>
</body></html>
